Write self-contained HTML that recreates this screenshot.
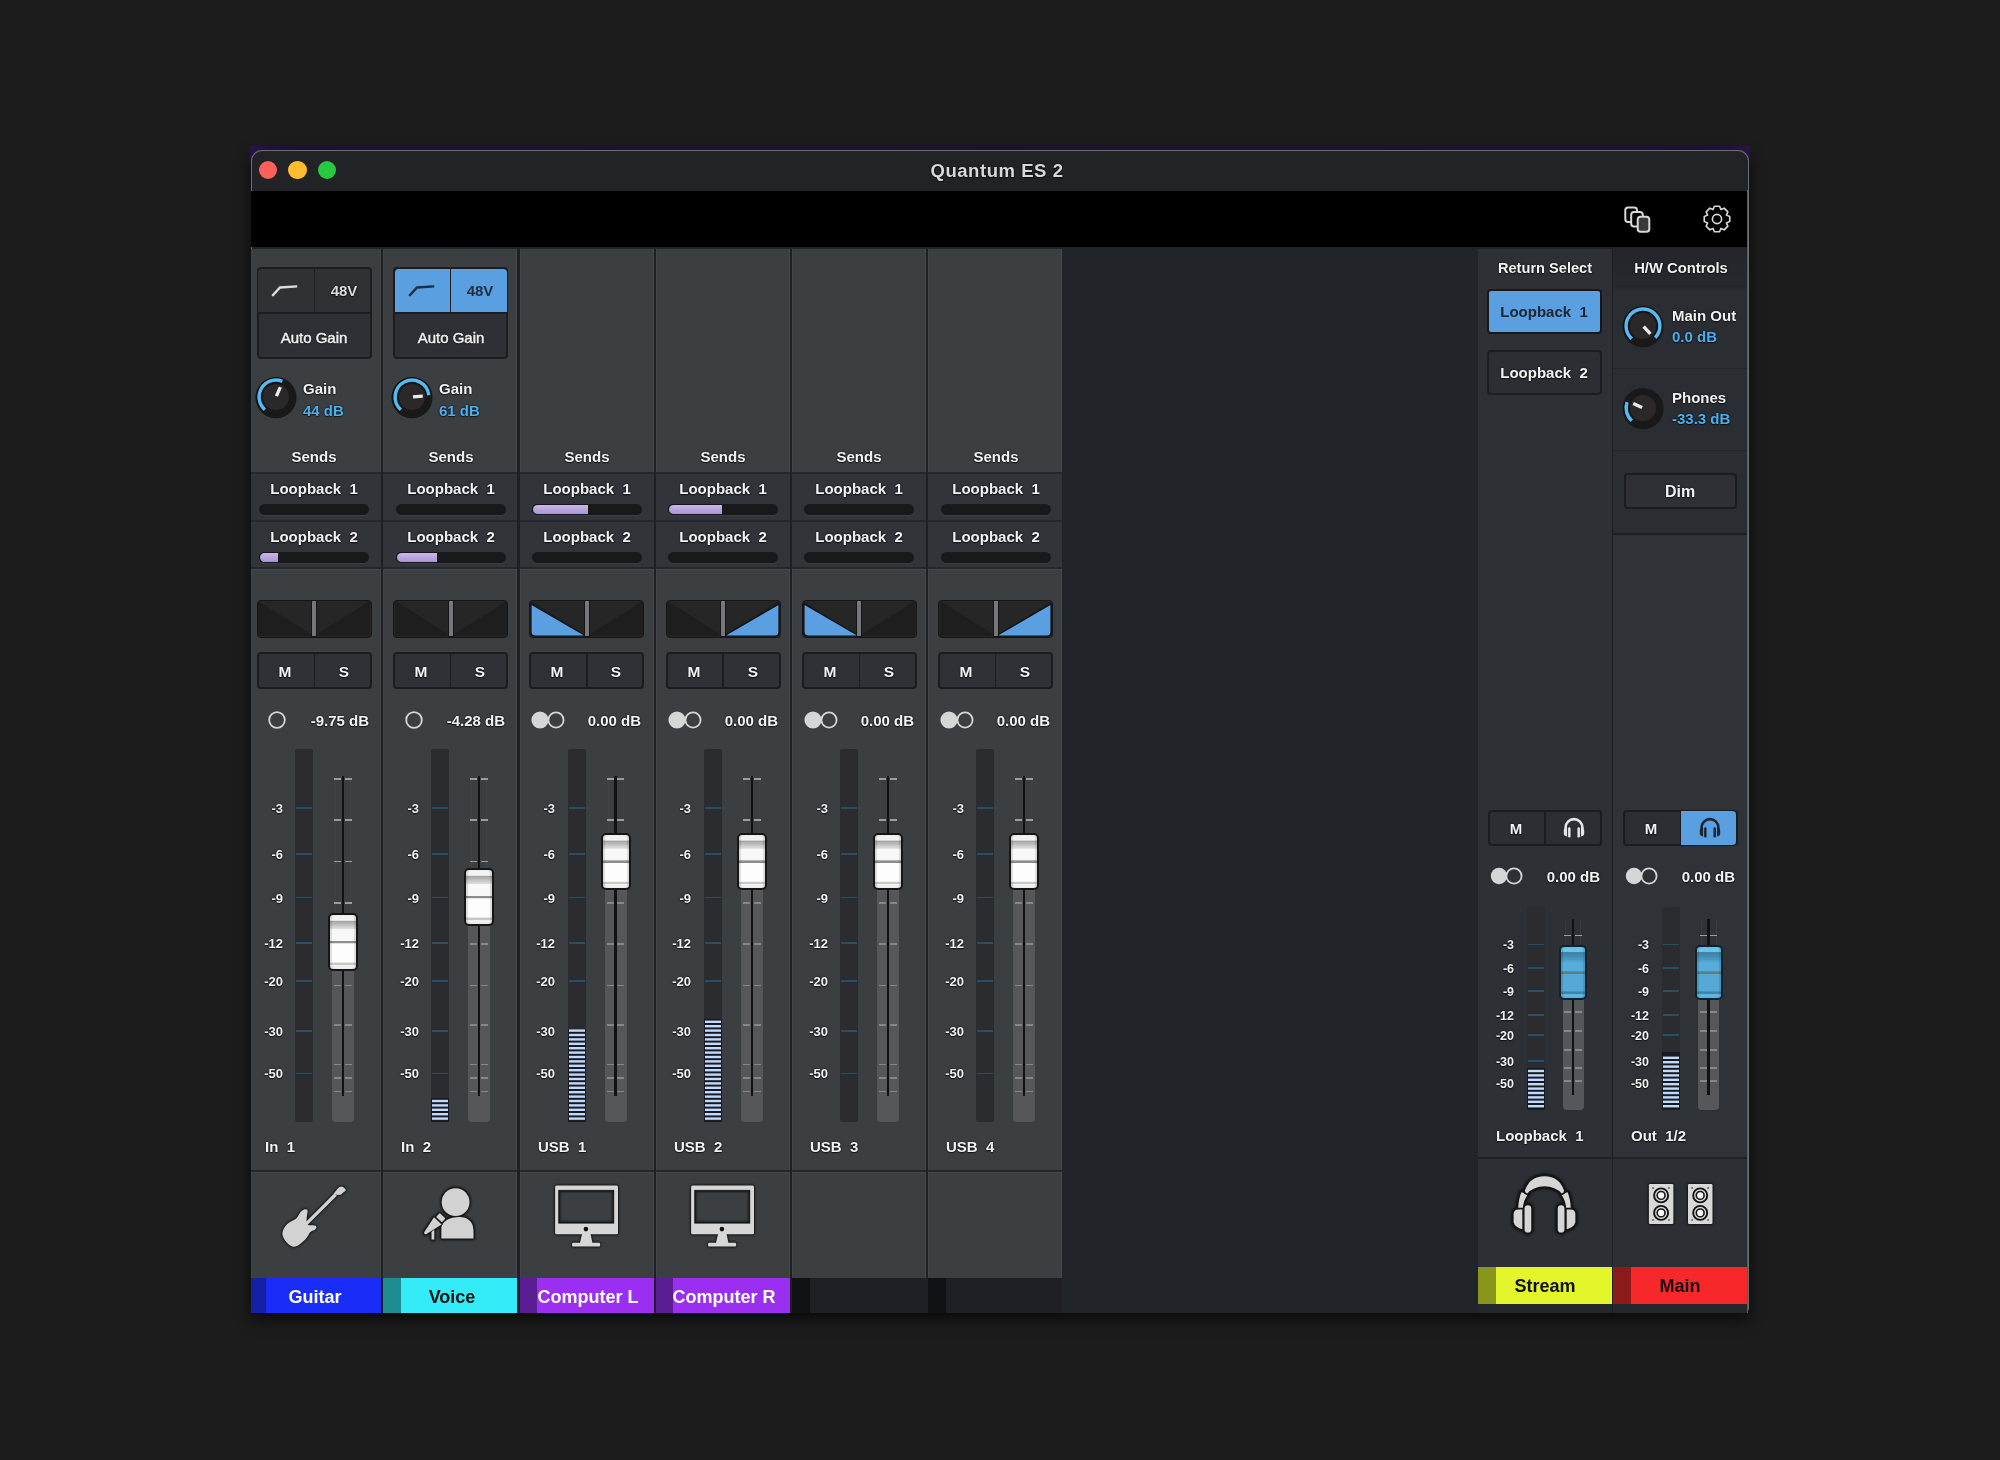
<!DOCTYPE html><html><head><meta charset="utf-8"><style>
html,body{margin:0;padding:0;background:#1c1c1d;width:2000px;height:1460px;overflow:hidden;font-family:"Liberation Sans", sans-serif;}
.a{position:absolute;box-sizing:border-box;}
.t{position:absolute;white-space:pre;line-height:1;text-shadow:0 0 2px rgba(0,0,0,.9),0 1px 1px rgba(0,0,0,.6);will-change:transform;}
</style></head><body>
<div class="a" style="left:250px;top:145.5px;width:1500px;height:16px;background:linear-gradient(90deg,#2c1450 0%,#22123a 3%,#1f1433 50%,#22123a 97%,#2c1450 100%);"></div>
<div class="a" style="left:250.5px;top:150px;width:1498px;height:1163px;background:#212429;border:1.5px solid #6c6d70;border-bottom:none;border-radius:11px 11px 5px 5px;overflow:hidden;box-shadow:0 6px 16px rgba(0,0,0,.65);"></div>
<div class="a" style="left:252px;top:151.5px;width:1495px;height:38.5px;background:#222326;border-radius:10px 10px 0 0;"></div>
<div class="a" style="left:259.1px;top:160.8px;width:18.4px;height:18.4px;border-radius:50%;background:#fe6159;"></div>
<div class="a" style="left:288.3px;top:160.8px;width:18.4px;height:18.4px;border-radius:50%;background:#fdbd2e;"></div>
<div class="a" style="left:317.8px;top:160.8px;width:18.4px;height:18.4px;border-radius:50%;background:#28c940;"></div>
<div class="t" style="left:797px;width:400px;text-align:center;top:161.8px;font-size:18.5px;color:#d9d9d9;font-weight:bold;letter-spacing:0.55px;">Quantum ES 2</div>
<div class="a" style="left:251px;top:190.5px;width:1497px;height:56.5px;background:#000;"></div>
<svg class="a" style="left:1610px;top:195px" width="50" height="50" viewBox="0 0 50 50">
<g fill="none" stroke="#d8d8d8" stroke-width="2">
<rect x="15.3" y="12.4" width="11.7" height="14.6" rx="2.8" fill="#000"/>
<rect x="21.2" y="16.9" width="11.6" height="14.6" rx="2.8" fill="#000"/>
<rect x="27.7" y="21.8" width="11.6" height="14.9" rx="2.8" fill="#3a3a3a"/>
</g></svg>
<svg class="a" style="left:1700px;top:202px" width="34" height="34" viewBox="0 0 34 34">
<path d="M13.12,7.57 L14.42,4.26 L19.58,4.26 L20.88,7.57 L20.93,7.59 L24.18,6.16 L27.84,9.82 L26.41,13.07 L26.43,13.12 L29.74,14.42 L29.74,19.58 L26.43,20.88 L26.41,20.93 L27.84,24.18 L24.18,27.84 L20.93,26.41 L20.88,26.43 L19.58,29.74 L14.42,29.74 L13.12,26.43 L13.07,26.41 L9.82,27.84 L6.16,24.18 L7.59,20.93 L7.57,20.88 L4.26,19.58 L4.26,14.42 L7.57,13.12 L7.59,13.07 L6.16,9.82 L9.82,6.16 L13.07,7.59 Z" fill="none" stroke="#d8d8d8" stroke-width="1.6" stroke-linejoin="round"/>
<circle cx="17" cy="17" r="4.6" fill="none" stroke="#d8d8d8" stroke-width="1.6"/></svg>
<div class="a" style="left:251px;top:249px;width:130.10000000000002px;height:1029px;background:#3b3f42;box-shadow:inset -1px 0 0 rgba(255,255,255,.05), inset 1px 0 0 rgba(255,255,255,.03);"></div>
<div class="a" style="left:251px;top:472px;width:130.10000000000002px;height:97px;background:#313438;border-top:2.2px solid #25272a;border-bottom:2.2px solid #25272a;"></div>
<div class="a" style="left:251px;top:520px;width:130.10000000000002px;height:2.2px;background:#25272a;"></div>
<div class="a" style="left:251px;top:569px;width:130.10000000000002px;height:1px;background:rgba(255,255,255,.05);"></div>
<div class="a" style="left:251px;top:1171.5px;width:130.10000000000002px;height:1px;background:rgba(255,255,255,.04);"></div>
<div class="a" style="left:251px;top:1169.5px;width:130.10000000000002px;height:2px;background:#25272b;"></div>
<div class="a" style="left:381.1px;top:249px;width:2.2px;height:1064px;background:#1e2023;"></div>
<div class="a" style="left:251px;top:1278px;width:130.10000000000002px;height:35px;background:#1a2df6;"></div>
<div class="a" style="left:251px;top:1278px;width:14.5px;height:35px;background:#1420a6;"></div>
<div class="t" style="left:115.30000000000001px;width:400px;text-align:center;top:1288.3px;font-size:18px;color:#fff;font-weight:bold;text-shadow:none;">Guitar</div>
<svg class="a" style="left:270px;top:1175px;filter:drop-shadow(0 0 1.2px #111) drop-shadow(0 0 0.8px #111);" width="90" height="90" viewBox="0 0 90 90"><g transform="translate(39.5,45.6) rotate(45)" fill="#d2d2d2"><path d="M 1.6,4.2 C 3.8,4 5.8,-0.2 8.4,-0.6 C 10.6,-0.7 10.9,2.6 9.8,4.2 C 8.8,5.6 8.4,7.2 8.9,9.2 C 9.6,12 10.6,15 10.3,19 C 10,25 9.5,28.5 6,30.5 C 2,32.2 -4,31.8 -8,29.8 C -12,27.8 -13.6,22 -13.2,17 C -12.9,13 -10.8,10 -11,6.5 C -11.2,3.5 -12.8,1.5 -12.2,-2 C -11.8,-4.8 -10.5,-6.2 -9.2,-6 C -7.6,-5.8 -6.2,-2.8 -4.4,-0.6 C -3.4,0.6 -2.5,1.8 -1.6,2.6 Z"/><path d="M -1.7,5 L -1.7,-37 L 1.7,-37 L 1.7,5 Z"/><path d="M -1.9,-36 L -2.8,-43 Q -2.8,-46.5 0,-47.5 L 3,-47.8 Q 4.8,-47.6 4.4,-45.5 L 3.8,-43 Q 4.5,-41.5 3.6,-40 L 1.9,-38 Z"/></g></svg>
<div class="a" style="left:256.8px;top:267px;width:115px;height:91.5px;background:#2f3035;border:2px solid #1b1d21;border-radius:4px;"></div>
<div class="a" style="left:258.3px;top:268.5px;width:112px;height:44px;background:#2f3135;border-radius:4px 4px 0 0;"></div>
<div class="a" style="left:256.8px;top:312px;width:115px;height:1.5px;background:#1d1e21;"></div>
<div class="a" style="left:313.5px;top:268px;width:1.6px;height:45px;background:#1d1e21;"></div>
<svg class="a" style="left:270.3px;top:280px" width="30" height="20" viewBox="0 0 30 20"><path d="M3,15 L10,7.5 L26,6.5" fill="none" stroke="#dcdcdc" stroke-width="2.4" stroke-linecap="square"/></svg>
<div class="t" style="left:143.8px;width:400px;text-align:center;top:283.3px;font-size:15px;color:#dcdcdc;font-weight:bold;">48V</div>
<div class="t" style="left:114.30000000000001px;width:400px;text-align:center;top:329.5px;font-size:15px;color:#f0f0f0;font-weight:normal;-webkit-text-stroke:0.45px #f0f0f0;">Auto Gain</div>
<svg style="position:absolute;left:254.2px;top:375.2px" width="44" height="44" viewBox="0 0 44 44"><circle cx="22.0" cy="22.6" r="20.6" fill="#19191a"/><circle cx="22.0" cy="22.0" r="13" fill="#2a2829"/><path d="M10.91,34.75 A16.9,16.9 0 0 1 28.33,6.33" fill="none" stroke="#0a0a0b" stroke-width="5.2"/><path d="M10.91,34.75 A16.9,16.9 0 0 1 28.33,6.33" fill="none" stroke="#55b9f2" stroke-width="3.5"/><line x1="22.41" y1="21.09" x2="26.39" y2="12.13" stroke="#ececec" stroke-width="3.3" /></svg>
<div class="t" style="left:303.1px;top:381.3px;font-size:15px;color:#f2f2f2;font-weight:bold;">Gain</div>
<div class="t" style="left:303.1px;top:403.3px;font-size:15px;color:#4aaff0;font-weight:bold;">44 dB</div>
<div class="t" style="left:114.30000000000001px;width:400px;text-align:center;top:448.9px;font-size:15px;color:#f2f2f2;font-weight:bold;">Sends</div>
<div class="t" style="left:114.30000000000001px;width:400px;text-align:center;top:481.3px;font-size:15px;color:#f2f2f2;font-weight:bold;">Loopback  1</div>
<div class="a" style="left:259.3px;top:504.4px;width:110px;height:11px;background:#17191a;border-radius:6px;box-shadow:0 1px 0 rgba(255,255,255,.05);"></div>
<div class="t" style="left:114.30000000000001px;width:400px;text-align:center;top:528.7px;font-size:15px;color:#f2f2f2;font-weight:bold;">Loopback  2</div>
<div class="a" style="left:259.3px;top:551.7px;width:110px;height:11px;background:#17191a;border-radius:6px;box-shadow:0 1px 0 rgba(255,255,255,.05);"></div>
<div class="a" style="left:259.3px;top:551.7px;width:19.8px;height:11px;background:linear-gradient(#c8b8e6,#a996d0);border:1.5px solid #16171a;border-radius:6px 1px 1px 6px;"></div>
<div class="a" style="left:256.8px;top:599.5px;width:115px;height:38px;background:#262626;border:1.5px solid #161617;border-radius:4px;overflow:hidden;"></div>
<svg class="a" style="left:258.3px;top:601px" width="112" height="35" viewBox="0 0 112 35"><path d="M0,0 L56,35 L112,0 L112,35 L0,35 Z" fill="#1e1e1f"/></svg>
<div class="a" style="left:311.3px;top:600.5px;width:6px;height:36px;background:#151516;"></div>
<div class="a" style="left:312.3px;top:601px;width:4px;height:35px;background:#76777a;"></div>
<div class="a" style="left:256.8px;top:652.3px;width:115px;height:37.2px;background:#303137;border:2px solid #1b1d21;border-radius:4px;"></div>
<div class="a" style="left:313.5px;top:653px;width:1.6px;height:36px;background:#1c1d20;"></div>
<div class="t" style="left:84.80000000000001px;width:400px;text-align:center;top:663.9px;font-size:15.5px;color:#f2f2f2;font-weight:bold;">M</div>
<div class="t" style="left:143.8px;width:400px;text-align:center;top:663.9px;font-size:15.5px;color:#f2f2f2;font-weight:bold;">S</div>
<svg class="a" style="left:267.3px;top:710px" width="20" height="20" viewBox="0 0 20 20"><circle cx="10" cy="10" r="7.8" fill="none" stroke="#d6d6d6" stroke-width="1.8"/></svg>
<div class="t" style="left:-31.19999999999999px;width:400px;text-align:right;top:712.8px;font-size:15px;color:#f2f2f2;font-weight:bold;">-9.75 dB</div>
<div class="t" style="left:-117.30000000000001px;width:400px;text-align:right;top:802.0px;font-size:13px;color:#f2f2f2;font-weight:bold;">-3</div>
<div class="t" style="left:-117.30000000000001px;width:400px;text-align:right;top:847.7px;font-size:13px;color:#f2f2f2;font-weight:bold;">-6</div>
<div class="t" style="left:-117.30000000000001px;width:400px;text-align:right;top:891.5px;font-size:13px;color:#f2f2f2;font-weight:bold;">-9</div>
<div class="t" style="left:-117.30000000000001px;width:400px;text-align:right;top:936.7px;font-size:13px;color:#f2f2f2;font-weight:bold;">-12</div>
<div class="t" style="left:-117.30000000000001px;width:400px;text-align:right;top:974.8px;font-size:13px;color:#f2f2f2;font-weight:bold;">-20</div>
<div class="t" style="left:-117.30000000000001px;width:400px;text-align:right;top:1024.6px;font-size:13px;color:#f2f2f2;font-weight:bold;">-30</div>
<div class="t" style="left:-117.30000000000001px;width:400px;text-align:right;top:1067.1px;font-size:13px;color:#f2f2f2;font-weight:bold;">-50</div>
<div class="a" style="left:295.0px;top:749px;width:18px;height:373px;background:#2a2c30;border-radius:2px;"></div><div class="a" style="left:296.0px;top:807.4000000000001px;width:16px;height:1.6px;background:#2b4d66;"></div><div class="a" style="left:296.0px;top:853.1px;width:16px;height:1.6px;background:#2b4d66;"></div><div class="a" style="left:296.0px;top:896.9000000000001px;width:16px;height:1.6px;background:#2b4d66;"></div><div class="a" style="left:296.0px;top:942.1px;width:16px;height:1.6px;background:#2b4d66;"></div><div class="a" style="left:296.0px;top:980.2px;width:16px;height:1.6px;background:#2b4d66;"></div><div class="a" style="left:296.0px;top:1030.0px;width:16px;height:1.6px;background:#2b4d66;"></div><div class="a" style="left:296.0px;top:1072.5px;width:16px;height:1.6px;background:#2b4d66;"></div>
<div class="a" style="left:332.0px;top:966.75px;width:22px;height:154.75px;background:#55575b;border-radius:0 0 4px 4px;"></div><div class="a" style="left:335.0px;top:776px;width:1px;height:137.25px;background:rgba(90,92,96,.2);"></div><div class="a" style="left:350.0px;top:776px;width:1px;height:137.25px;background:rgba(90,92,96,.2);"></div><div class="a" style="left:341.9px;top:776px;width:2.2px;height:320px;background:#111214;"></div><div class="a" style="left:334.0px;top:778.2px;width:7px;height:1.6px;background:#9a9c9f;"></div><div class="a" style="left:344.8px;top:778.2px;width:7px;height:1.6px;background:#9a9c9f;"></div><div class="a" style="left:334.0px;top:819.2px;width:7px;height:1.6px;background:#9a9c9f;"></div><div class="a" style="left:344.8px;top:819.2px;width:7px;height:1.6px;background:#9a9c9f;"></div><div class="a" style="left:334.0px;top:860.7px;width:7px;height:1.6px;background:#9a9c9f;"></div><div class="a" style="left:344.8px;top:860.7px;width:7px;height:1.6px;background:#9a9c9f;"></div><div class="a" style="left:334.0px;top:902.2px;width:7px;height:1.6px;background:#9a9c9f;"></div><div class="a" style="left:344.8px;top:902.2px;width:7px;height:1.6px;background:#9a9c9f;"></div><div class="a" style="left:334.0px;top:943.2px;width:7px;height:1.6px;background:#9a9c9f;"></div><div class="a" style="left:344.8px;top:943.2px;width:7px;height:1.6px;background:#9a9c9f;"></div><div class="a" style="left:334.0px;top:984.7px;width:7px;height:1.6px;background:#85878a;"></div><div class="a" style="left:344.8px;top:984.7px;width:7px;height:1.6px;background:#85878a;"></div><div class="a" style="left:334.0px;top:1024.2px;width:7px;height:1.6px;background:#85878a;"></div><div class="a" style="left:344.8px;top:1024.2px;width:7px;height:1.6px;background:#85878a;"></div><div class="a" style="left:334.0px;top:1063.8px;width:7px;height:1.6px;background:#85878a;"></div><div class="a" style="left:344.8px;top:1063.8px;width:7px;height:1.6px;background:#85878a;"></div><div class="a" style="left:334.0px;top:1077.2px;width:7px;height:1.6px;background:#85878a;"></div><div class="a" style="left:344.8px;top:1077.2px;width:7px;height:1.6px;background:#85878a;"></div><div class="a" style="left:334.0px;top:1090.6000000000001px;width:7px;height:1.6px;background:#85878a;"></div><div class="a" style="left:344.8px;top:1090.6000000000001px;width:7px;height:1.6px;background:#85878a;"></div><div class="a" style="left:328.0px;top:913.25px;width:30px;height:57.5px;background:linear-gradient(#f3f3f3 0%,#f3f3f3 10%,#a2a2a2 11%,#dddddd 25%,#f8f8f8 27%,#f8f8f8 47.5%,#8c8c8c 48.5%,#8c8c8c 52%,#fdfdfd 53%,#fdfdfd 87.5%,#c8c8c8 88.5%,#c8c8c8 92%,#f0f0f0 93%,#f0f0f0 100%);border:2.2px solid #161616;border-radius:5px;box-shadow:inset 2px 0 1px rgba(0,0,0,.12),inset -2px 0 1px rgba(0,0,0,.12);"></div>
<div class="t" style="left:265.1px;top:1139.0px;font-size:15px;color:#f2f2f2;font-weight:bold;">In  1</div>
<div class="a" style="left:383.36px;top:249px;width:134.0px;height:1029px;background:#3b3f42;box-shadow:inset -1px 0 0 rgba(255,255,255,.05), inset 1px 0 0 rgba(255,255,255,.03);"></div>
<div class="a" style="left:383.36px;top:472px;width:134.0px;height:97px;background:#313438;border-top:2.2px solid #25272a;border-bottom:2.2px solid #25272a;"></div>
<div class="a" style="left:383.36px;top:520px;width:134.0px;height:2.2px;background:#25272a;"></div>
<div class="a" style="left:383.36px;top:569px;width:134.0px;height:1px;background:rgba(255,255,255,.05);"></div>
<div class="a" style="left:383.36px;top:1171.5px;width:134.0px;height:1px;background:rgba(255,255,255,.04);"></div>
<div class="a" style="left:383.36px;top:1169.5px;width:134.0px;height:2px;background:#25272b;"></div>
<div class="a" style="left:517.36px;top:249px;width:2.2px;height:1064px;background:#1e2023;"></div>
<div class="a" style="left:383.36px;top:1278px;width:134.0px;height:35px;background:#33ecf7;"></div>
<div class="a" style="left:383.36px;top:1278px;width:17.5px;height:35px;background:#1f8c92;"></div>
<div class="t" style="left:251.56px;width:400px;text-align:center;top:1288.3px;font-size:18px;color:#111;font-weight:bold;text-shadow:none;">Voice</div>
<svg class="a" style="left:405.06px;top:1175px;filter:drop-shadow(0 0 1.2px #111) drop-shadow(0 0 0.8px #111);" width="90" height="90" viewBox="0 0 90 90"><g fill="#d2d2d2" stroke="#1b1b1c" stroke-width="1.5" paint-order="stroke"><circle cx="50.6" cy="27.2" r="13.9"/><path d="M 36.4,63.6 L 36.4,52.5 C 36.8,46.5 44,42 55,41.9 C 62,42 66.5,46 67.8,51 C 68.6,54.5 68.6,58.5 68.5,63.6 Z"/><rect x="26.5" y="50.5" width="2.8" height="14"/><path d="M 29,42.3 L 36.6,49.4 L 21.5,59 Q 19.2,59.8 19,57.5 Z"/><g transform="translate(35.8,42.7) rotate(43)"><rect x="-4" y="-2.6" width="8" height="5.2" rx="0.8"/></g></g></svg>
<div class="a" style="left:393.06px;top:267px;width:115px;height:91.5px;background:#2f3035;border:2px solid #1b1d21;border-radius:4px;"></div>
<div class="a" style="left:394.56px;top:268.5px;width:112px;height:44px;background:#5a9fe0;border-radius:4px 4px 0 0;"></div>
<div class="a" style="left:393.06px;top:312px;width:115px;height:1.5px;background:#1d1e21;"></div>
<div class="a" style="left:449.76px;top:268px;width:1.6px;height:45px;background:#1d1e21;"></div>
<svg class="a" style="left:406.56px;top:280px" width="30" height="20" viewBox="0 0 30 20"><path d="M3,15 L10,7.5 L26,6.5" fill="none" stroke="#1f2e40" stroke-width="2.4" stroke-linecap="square"/></svg>
<div class="t" style="left:280.06px;width:400px;text-align:center;top:283.3px;font-size:15px;color:#1f2e40;font-weight:bold;text-shadow:none;">48V</div>
<div class="t" style="left:250.56px;width:400px;text-align:center;top:329.5px;font-size:15px;color:#f0f0f0;font-weight:normal;-webkit-text-stroke:0.45px #f0f0f0;">Auto Gain</div>
<svg style="position:absolute;left:390.46px;top:375.2px" width="44" height="44" viewBox="0 0 44 44"><circle cx="22.0" cy="22.6" r="20.6" fill="#19191a"/><circle cx="22.0" cy="22.0" r="13" fill="#2a2829"/><path d="M10.91,34.75 A16.9,16.9 0 1 1 38.81,20.23" fill="none" stroke="#0a0a0b" stroke-width="5.2"/><path d="M10.91,34.75 A16.9,16.9 0 1 1 38.81,20.23" fill="none" stroke="#55b9f2" stroke-width="3.5"/><line x1="23.00" y1="21.91" x2="32.76" y2="21.06" stroke="#ececec" stroke-width="3.3" /></svg>
<div class="t" style="left:439.36px;top:381.3px;font-size:15px;color:#f2f2f2;font-weight:bold;">Gain</div>
<div class="t" style="left:439.36px;top:403.3px;font-size:15px;color:#4aaff0;font-weight:bold;">61 dB</div>
<div class="t" style="left:250.56px;width:400px;text-align:center;top:448.9px;font-size:15px;color:#f2f2f2;font-weight:bold;">Sends</div>
<div class="t" style="left:250.56px;width:400px;text-align:center;top:481.3px;font-size:15px;color:#f2f2f2;font-weight:bold;">Loopback  1</div>
<div class="a" style="left:395.56px;top:504.4px;width:110px;height:11px;background:#17191a;border-radius:6px;box-shadow:0 1px 0 rgba(255,255,255,.05);"></div>
<div class="t" style="left:250.56px;width:400px;text-align:center;top:528.7px;font-size:15px;color:#f2f2f2;font-weight:bold;">Loopback  2</div>
<div class="a" style="left:395.56px;top:551.7px;width:110px;height:11px;background:#17191a;border-radius:6px;box-shadow:0 1px 0 rgba(255,255,255,.05);"></div>
<div class="a" style="left:395.56px;top:551.7px;width:42.9px;height:11px;background:linear-gradient(#c8b8e6,#a996d0);border:1.5px solid #16171a;border-radius:6px 1px 1px 6px;"></div>
<div class="a" style="left:393.06px;top:599.5px;width:115px;height:38px;background:#262626;border:1.5px solid #161617;border-radius:4px;overflow:hidden;"></div>
<svg class="a" style="left:394.56px;top:601px" width="112" height="35" viewBox="0 0 112 35"><path d="M0,0 L56,35 L112,0 L112,35 L0,35 Z" fill="#1e1e1f"/></svg>
<div class="a" style="left:447.56px;top:600.5px;width:6px;height:36px;background:#151516;"></div>
<div class="a" style="left:448.56px;top:601px;width:4px;height:35px;background:#76777a;"></div>
<div class="a" style="left:393.06px;top:652.3px;width:115px;height:37.2px;background:#303137;border:2px solid #1b1d21;border-radius:4px;"></div>
<div class="a" style="left:449.76px;top:653px;width:1.6px;height:36px;background:#1c1d20;"></div>
<div class="t" style="left:221.06px;width:400px;text-align:center;top:663.9px;font-size:15.5px;color:#f2f2f2;font-weight:bold;">M</div>
<div class="t" style="left:280.06px;width:400px;text-align:center;top:663.9px;font-size:15.5px;color:#f2f2f2;font-weight:bold;">S</div>
<svg class="a" style="left:403.56px;top:710px" width="20" height="20" viewBox="0 0 20 20"><circle cx="10" cy="10" r="7.8" fill="none" stroke="#d6d6d6" stroke-width="1.8"/></svg>
<div class="t" style="left:105.06px;width:400px;text-align:right;top:712.8px;font-size:15px;color:#f2f2f2;font-weight:bold;">-4.28 dB</div>
<div class="t" style="left:18.95999999999998px;width:400px;text-align:right;top:802.0px;font-size:13px;color:#f2f2f2;font-weight:bold;">-3</div>
<div class="t" style="left:18.95999999999998px;width:400px;text-align:right;top:847.7px;font-size:13px;color:#f2f2f2;font-weight:bold;">-6</div>
<div class="t" style="left:18.95999999999998px;width:400px;text-align:right;top:891.5px;font-size:13px;color:#f2f2f2;font-weight:bold;">-9</div>
<div class="t" style="left:18.95999999999998px;width:400px;text-align:right;top:936.7px;font-size:13px;color:#f2f2f2;font-weight:bold;">-12</div>
<div class="t" style="left:18.95999999999998px;width:400px;text-align:right;top:974.8px;font-size:13px;color:#f2f2f2;font-weight:bold;">-20</div>
<div class="t" style="left:18.95999999999998px;width:400px;text-align:right;top:1024.6px;font-size:13px;color:#f2f2f2;font-weight:bold;">-30</div>
<div class="t" style="left:18.95999999999998px;width:400px;text-align:right;top:1067.1px;font-size:13px;color:#f2f2f2;font-weight:bold;">-50</div>
<div class="a" style="left:431.26px;top:749px;width:18px;height:373px;background:#2a2c30;border-radius:2px;"></div><div class="a" style="left:432.26px;top:807.4000000000001px;width:16px;height:1.6px;background:#2b4d66;"></div><div class="a" style="left:432.26px;top:853.1px;width:16px;height:1.6px;background:#2b4d66;"></div><div class="a" style="left:432.26px;top:896.9000000000001px;width:16px;height:1.6px;background:#2b4d66;"></div><div class="a" style="left:432.26px;top:942.1px;width:16px;height:1.6px;background:#2b4d66;"></div><div class="a" style="left:432.26px;top:980.2px;width:16px;height:1.6px;background:#2b4d66;"></div><div class="a" style="left:432.26px;top:1030.0px;width:16px;height:1.6px;background:#2b4d66;"></div><div class="a" style="left:432.26px;top:1072.5px;width:16px;height:1.6px;background:#2b4d66;"></div><svg class="a" style="left:431.26px;top:1098px" width="18" height="24" viewBox="0 0 18 24"><rect width="18" height="24" fill="#161a22"/><rect x="1" y="19.40" width="16" height="2.4" fill="#c4d9fb"/><rect x="1" y="15.00" width="16" height="2.4" fill="#c4d9fb"/><rect x="1" y="10.60" width="16" height="2.4" fill="#c4d9fb"/><rect x="1" y="6.20" width="16" height="2.4" fill="#c4d9fb"/><rect x="1" y="1.80" width="16" height="2.4" fill="#c4d9fb"/></svg>
<div class="a" style="left:468.26px;top:921.75px;width:22px;height:199.75px;background:#55575b;border-radius:0 0 4px 4px;"></div><div class="a" style="left:471.26px;top:776px;width:1px;height:92.25px;background:rgba(90,92,96,.2);"></div><div class="a" style="left:486.26px;top:776px;width:1px;height:92.25px;background:rgba(90,92,96,.2);"></div><div class="a" style="left:478.15999999999997px;top:776px;width:2.2px;height:320px;background:#111214;"></div><div class="a" style="left:470.26px;top:778.2px;width:7px;height:1.6px;background:#9a9c9f;"></div><div class="a" style="left:481.06px;top:778.2px;width:7px;height:1.6px;background:#9a9c9f;"></div><div class="a" style="left:470.26px;top:819.2px;width:7px;height:1.6px;background:#9a9c9f;"></div><div class="a" style="left:481.06px;top:819.2px;width:7px;height:1.6px;background:#9a9c9f;"></div><div class="a" style="left:470.26px;top:860.7px;width:7px;height:1.6px;background:#9a9c9f;"></div><div class="a" style="left:481.06px;top:860.7px;width:7px;height:1.6px;background:#9a9c9f;"></div><div class="a" style="left:470.26px;top:902.2px;width:7px;height:1.6px;background:#9a9c9f;"></div><div class="a" style="left:481.06px;top:902.2px;width:7px;height:1.6px;background:#9a9c9f;"></div><div class="a" style="left:470.26px;top:943.2px;width:7px;height:1.6px;background:#85878a;"></div><div class="a" style="left:481.06px;top:943.2px;width:7px;height:1.6px;background:#85878a;"></div><div class="a" style="left:470.26px;top:984.7px;width:7px;height:1.6px;background:#85878a;"></div><div class="a" style="left:481.06px;top:984.7px;width:7px;height:1.6px;background:#85878a;"></div><div class="a" style="left:470.26px;top:1024.2px;width:7px;height:1.6px;background:#85878a;"></div><div class="a" style="left:481.06px;top:1024.2px;width:7px;height:1.6px;background:#85878a;"></div><div class="a" style="left:470.26px;top:1063.8px;width:7px;height:1.6px;background:#85878a;"></div><div class="a" style="left:481.06px;top:1063.8px;width:7px;height:1.6px;background:#85878a;"></div><div class="a" style="left:470.26px;top:1077.2px;width:7px;height:1.6px;background:#85878a;"></div><div class="a" style="left:481.06px;top:1077.2px;width:7px;height:1.6px;background:#85878a;"></div><div class="a" style="left:470.26px;top:1090.6000000000001px;width:7px;height:1.6px;background:#85878a;"></div><div class="a" style="left:481.06px;top:1090.6000000000001px;width:7px;height:1.6px;background:#85878a;"></div><div class="a" style="left:464.26px;top:868.25px;width:30px;height:57.5px;background:linear-gradient(#f3f3f3 0%,#f3f3f3 10%,#a2a2a2 11%,#dddddd 25%,#f8f8f8 27%,#f8f8f8 47.5%,#8c8c8c 48.5%,#8c8c8c 52%,#fdfdfd 53%,#fdfdfd 87.5%,#c8c8c8 88.5%,#c8c8c8 92%,#f0f0f0 93%,#f0f0f0 100%);border:2.2px solid #161616;border-radius:5px;box-shadow:inset 2px 0 1px rgba(0,0,0,.12),inset -2px 0 1px rgba(0,0,0,.12);"></div>
<div class="t" style="left:401.36px;top:1139.0px;font-size:15px;color:#f2f2f2;font-weight:bold;">In  2</div>
<div class="a" style="left:519.6199999999999px;top:249px;width:134.0px;height:1029px;background:#3b3f42;box-shadow:inset -1px 0 0 rgba(255,255,255,.05), inset 1px 0 0 rgba(255,255,255,.03);"></div>
<div class="a" style="left:519.6199999999999px;top:472px;width:134.0px;height:97px;background:#313438;border-top:2.2px solid #25272a;border-bottom:2.2px solid #25272a;"></div>
<div class="a" style="left:519.6199999999999px;top:520px;width:134.0px;height:2.2px;background:#25272a;"></div>
<div class="a" style="left:519.6199999999999px;top:569px;width:134.0px;height:1px;background:rgba(255,255,255,.05);"></div>
<div class="a" style="left:519.6199999999999px;top:1171.5px;width:134.0px;height:1px;background:rgba(255,255,255,.04);"></div>
<div class="a" style="left:519.6199999999999px;top:1169.5px;width:134.0px;height:2px;background:#25272b;"></div>
<div class="a" style="left:653.6199999999999px;top:249px;width:2.2px;height:1064px;background:#1e2023;"></div>
<div class="a" style="left:519.6199999999999px;top:1278px;width:134.0px;height:35px;background:#9a2ff2;"></div>
<div class="a" style="left:519.6199999999999px;top:1278px;width:17.5px;height:35px;background:#5b1d92;"></div>
<div class="t" style="left:387.81999999999994px;width:400px;text-align:center;top:1288.3px;font-size:18px;color:#fff;font-weight:bold;text-shadow:none;">Computer L</div>
<svg class="a" style="left:540.02px;top:1175px;filter:drop-shadow(0 0 1.2px #111) drop-shadow(0 0 0.8px #111);" width="90" height="90" viewBox="0 0 90 90"><path fill="#d6d6d6" fill-rule="evenodd" d="M 16.6,10.5 L 76.5,10.5 Q 78,10.5 78,12 L 78,57.7 Q 78,59.2 76.5,59.2 L 16.6,59.2 Q 15.1,59.2 15.1,57.7 L 15.1,12 Q 15.1,10.5 16.6,10.5 Z M 18.8,15.4 L 18.8,48.1 L 73.7,48.1 L 73.7,15.4 Z"/><rect x="18.8" y="15.4" width="54.9" height="32.7" fill="none" stroke="#1a1a1a" stroke-width="1"/><circle cx="45.9" cy="54.1" r="2.3" fill="#111"/><path fill="#d6d6d6" d="M 42,59 L 50.6,59 L 52.4,67.8 L 59,67.8 Q 60.2,67.8 60.2,69 L 60.2,70.3 Q 60.2,71.5 59,71.5 L 33.2,71.5 Q 32,71.5 32,70.3 L 32,69 Q 32,67.8 33.2,67.8 L 40,67.8 Z"/></svg>
<div class="t" style="left:386.81999999999994px;width:400px;text-align:center;top:448.9px;font-size:15px;color:#f2f2f2;font-weight:bold;">Sends</div>
<div class="t" style="left:386.81999999999994px;width:400px;text-align:center;top:481.3px;font-size:15px;color:#f2f2f2;font-weight:bold;">Loopback  1</div>
<div class="a" style="left:531.8199999999999px;top:504.4px;width:110px;height:11px;background:#17191a;border-radius:6px;box-shadow:0 1px 0 rgba(255,255,255,.05);"></div>
<div class="a" style="left:531.8199999999999px;top:504.4px;width:57.2px;height:11px;background:linear-gradient(#c8b8e6,#a996d0);border:1.5px solid #16171a;border-radius:6px 1px 1px 6px;"></div>
<div class="t" style="left:386.81999999999994px;width:400px;text-align:center;top:528.7px;font-size:15px;color:#f2f2f2;font-weight:bold;">Loopback  2</div>
<div class="a" style="left:531.8199999999999px;top:551.7px;width:110px;height:11px;background:#17191a;border-radius:6px;box-shadow:0 1px 0 rgba(255,255,255,.05);"></div>
<div class="a" style="left:529.3199999999999px;top:599.5px;width:115px;height:38px;background:#262626;border:1.5px solid #161617;border-radius:4px;overflow:hidden;"></div>
<svg class="a" style="left:530.8199999999999px;top:601px" width="112" height="35" viewBox="0 0 112 35"><path d="M0,0 L56,35 L112,0 L112,35 L0,35 Z" fill="#1e1e1f"/></svg>
<svg class="a" style="left:529.3199999999999px;top:599.5px" width="115" height="38" viewBox="0 0 115 38"><path d="M2,4 L57,36 L6,36 Q2,36 2,32 Z" fill="#5a9fe2" stroke="#111" stroke-width="1.2"/></svg>
<div class="a" style="left:583.8199999999999px;top:600.5px;width:6px;height:36px;background:#151516;"></div>
<div class="a" style="left:584.8199999999999px;top:601px;width:4px;height:35px;background:#76777a;"></div>
<div class="a" style="left:529.3199999999999px;top:652.3px;width:115px;height:37.2px;background:#303137;border:2px solid #1b1d21;border-radius:4px;"></div>
<div class="a" style="left:586.02px;top:653px;width:1.6px;height:36px;background:#1c1d20;"></div>
<div class="t" style="left:357.31999999999994px;width:400px;text-align:center;top:663.9px;font-size:15.5px;color:#f2f2f2;font-weight:bold;">M</div>
<div class="t" style="left:416.31999999999994px;width:400px;text-align:center;top:663.9px;font-size:15.5px;color:#f2f2f2;font-weight:bold;">S</div>
<svg class="a" style="left:530.3199999999999px;top:710px" width="36" height="20" viewBox="0 0 36 20"><circle cx="10" cy="10" r="8.6" fill="#d6d6d6"/><circle cx="26" cy="10" r="7.6" fill="#3b3f42" stroke="#d6d6d6" stroke-width="1.8"/></svg>
<div class="t" style="left:241.31999999999994px;width:400px;text-align:right;top:712.8px;font-size:15px;color:#f2f2f2;font-weight:bold;">0.00 dB</div>
<div class="t" style="left:155.2199999999999px;width:400px;text-align:right;top:802.0px;font-size:13px;color:#f2f2f2;font-weight:bold;">-3</div>
<div class="t" style="left:155.2199999999999px;width:400px;text-align:right;top:847.7px;font-size:13px;color:#f2f2f2;font-weight:bold;">-6</div>
<div class="t" style="left:155.2199999999999px;width:400px;text-align:right;top:891.5px;font-size:13px;color:#f2f2f2;font-weight:bold;">-9</div>
<div class="t" style="left:155.2199999999999px;width:400px;text-align:right;top:936.7px;font-size:13px;color:#f2f2f2;font-weight:bold;">-12</div>
<div class="t" style="left:155.2199999999999px;width:400px;text-align:right;top:974.8px;font-size:13px;color:#f2f2f2;font-weight:bold;">-20</div>
<div class="t" style="left:155.2199999999999px;width:400px;text-align:right;top:1024.6px;font-size:13px;color:#f2f2f2;font-weight:bold;">-30</div>
<div class="t" style="left:155.2199999999999px;width:400px;text-align:right;top:1067.1px;font-size:13px;color:#f2f2f2;font-weight:bold;">-50</div>
<div class="a" style="left:567.52px;top:749px;width:18px;height:373px;background:#2a2c30;border-radius:2px;"></div><div class="a" style="left:568.52px;top:807.4000000000001px;width:16px;height:1.6px;background:#2b4d66;"></div><div class="a" style="left:568.52px;top:853.1px;width:16px;height:1.6px;background:#2b4d66;"></div><div class="a" style="left:568.52px;top:896.9000000000001px;width:16px;height:1.6px;background:#2b4d66;"></div><div class="a" style="left:568.52px;top:942.1px;width:16px;height:1.6px;background:#2b4d66;"></div><div class="a" style="left:568.52px;top:980.2px;width:16px;height:1.6px;background:#2b4d66;"></div><svg class="a" style="left:567.52px;top:1029px" width="18" height="93" viewBox="0 0 18 93"><rect width="18" height="93" fill="#161a22"/><rect x="1" y="88.40" width="16" height="2.4" fill="#c4d9fb"/><rect x="1" y="84.00" width="16" height="2.4" fill="#c4d9fb"/><rect x="1" y="79.60" width="16" height="2.4" fill="#c4d9fb"/><rect x="1" y="75.20" width="16" height="2.4" fill="#c4d9fb"/><rect x="1" y="70.80" width="16" height="2.4" fill="#c4d9fb"/><rect x="1" y="66.40" width="16" height="2.4" fill="#c4d9fb"/><rect x="1" y="62.00" width="16" height="2.4" fill="#c4d9fb"/><rect x="1" y="57.60" width="16" height="2.4" fill="#c4d9fb"/><rect x="1" y="53.20" width="16" height="2.4" fill="#c4d9fb"/><rect x="1" y="48.80" width="16" height="2.4" fill="#c4d9fb"/><rect x="1" y="44.40" width="16" height="2.4" fill="#c4d9fb"/><rect x="1" y="40.00" width="16" height="2.4" fill="#c4d9fb"/><rect x="1" y="35.60" width="16" height="2.4" fill="#c4d9fb"/><rect x="1" y="31.20" width="16" height="2.4" fill="#c4d9fb"/><rect x="1" y="26.80" width="16" height="2.4" fill="#c4d9fb"/><rect x="1" y="22.40" width="16" height="2.4" fill="#c4d9fb"/><rect x="1" y="18.00" width="16" height="2.4" fill="#c4d9fb"/><rect x="1" y="13.60" width="16" height="2.4" fill="#c4d9fb"/><rect x="1" y="9.20" width="16" height="2.4" fill="#c4d9fb"/><rect x="1" y="4.80" width="16" height="2.4" fill="#c4d9fb"/><rect x="1" y="0.40" width="16" height="2.4" fill="#c4d9fb"/></svg>
<div class="a" style="left:604.52px;top:886.25px;width:22px;height:235.25px;background:#55575b;border-radius:0 0 4px 4px;"></div><div class="a" style="left:607.52px;top:776px;width:1px;height:56.75px;background:rgba(90,92,96,.2);"></div><div class="a" style="left:622.52px;top:776px;width:1px;height:56.75px;background:rgba(90,92,96,.2);"></div><div class="a" style="left:614.42px;top:776px;width:2.2px;height:320px;background:#111214;"></div><div class="a" style="left:606.52px;top:778.2px;width:7px;height:1.6px;background:#9a9c9f;"></div><div class="a" style="left:617.3199999999999px;top:778.2px;width:7px;height:1.6px;background:#9a9c9f;"></div><div class="a" style="left:606.52px;top:819.2px;width:7px;height:1.6px;background:#9a9c9f;"></div><div class="a" style="left:617.3199999999999px;top:819.2px;width:7px;height:1.6px;background:#9a9c9f;"></div><div class="a" style="left:606.52px;top:860.7px;width:7px;height:1.6px;background:#9a9c9f;"></div><div class="a" style="left:617.3199999999999px;top:860.7px;width:7px;height:1.6px;background:#9a9c9f;"></div><div class="a" style="left:606.52px;top:902.2px;width:7px;height:1.6px;background:#85878a;"></div><div class="a" style="left:617.3199999999999px;top:902.2px;width:7px;height:1.6px;background:#85878a;"></div><div class="a" style="left:606.52px;top:943.2px;width:7px;height:1.6px;background:#85878a;"></div><div class="a" style="left:617.3199999999999px;top:943.2px;width:7px;height:1.6px;background:#85878a;"></div><div class="a" style="left:606.52px;top:984.7px;width:7px;height:1.6px;background:#85878a;"></div><div class="a" style="left:617.3199999999999px;top:984.7px;width:7px;height:1.6px;background:#85878a;"></div><div class="a" style="left:606.52px;top:1024.2px;width:7px;height:1.6px;background:#85878a;"></div><div class="a" style="left:617.3199999999999px;top:1024.2px;width:7px;height:1.6px;background:#85878a;"></div><div class="a" style="left:606.52px;top:1063.8px;width:7px;height:1.6px;background:#85878a;"></div><div class="a" style="left:617.3199999999999px;top:1063.8px;width:7px;height:1.6px;background:#85878a;"></div><div class="a" style="left:606.52px;top:1077.2px;width:7px;height:1.6px;background:#85878a;"></div><div class="a" style="left:617.3199999999999px;top:1077.2px;width:7px;height:1.6px;background:#85878a;"></div><div class="a" style="left:606.52px;top:1090.6000000000001px;width:7px;height:1.6px;background:#85878a;"></div><div class="a" style="left:617.3199999999999px;top:1090.6000000000001px;width:7px;height:1.6px;background:#85878a;"></div><div class="a" style="left:600.52px;top:832.75px;width:30px;height:57.5px;background:linear-gradient(#f3f3f3 0%,#f3f3f3 10%,#a2a2a2 11%,#dddddd 25%,#f8f8f8 27%,#f8f8f8 47.5%,#8c8c8c 48.5%,#8c8c8c 52%,#fdfdfd 53%,#fdfdfd 87.5%,#c8c8c8 88.5%,#c8c8c8 92%,#f0f0f0 93%,#f0f0f0 100%);border:2.2px solid #161616;border-radius:5px;box-shadow:inset 2px 0 1px rgba(0,0,0,.12),inset -2px 0 1px rgba(0,0,0,.12);"></div>
<div class="t" style="left:537.6199999999999px;top:1139.0px;font-size:15px;color:#f2f2f2;font-weight:bold;">USB  1</div>
<div class="a" style="left:655.8799999999999px;top:249px;width:134.0px;height:1029px;background:#3b3f42;box-shadow:inset -1px 0 0 rgba(255,255,255,.05), inset 1px 0 0 rgba(255,255,255,.03);"></div>
<div class="a" style="left:655.8799999999999px;top:472px;width:134.0px;height:97px;background:#313438;border-top:2.2px solid #25272a;border-bottom:2.2px solid #25272a;"></div>
<div class="a" style="left:655.8799999999999px;top:520px;width:134.0px;height:2.2px;background:#25272a;"></div>
<div class="a" style="left:655.8799999999999px;top:569px;width:134.0px;height:1px;background:rgba(255,255,255,.05);"></div>
<div class="a" style="left:655.8799999999999px;top:1171.5px;width:134.0px;height:1px;background:rgba(255,255,255,.04);"></div>
<div class="a" style="left:655.8799999999999px;top:1169.5px;width:134.0px;height:2px;background:#25272b;"></div>
<div class="a" style="left:789.8799999999999px;top:249px;width:2.2px;height:1064px;background:#1e2023;"></div>
<div class="a" style="left:655.8799999999999px;top:1278px;width:134.0px;height:35px;background:#9a2ff2;"></div>
<div class="a" style="left:655.8799999999999px;top:1278px;width:17.5px;height:35px;background:#5b1d92;"></div>
<div class="t" style="left:524.0799999999999px;width:400px;text-align:center;top:1288.3px;font-size:18px;color:#fff;font-weight:bold;text-shadow:none;">Computer R</div>
<svg class="a" style="left:676.28px;top:1175px;filter:drop-shadow(0 0 1.2px #111) drop-shadow(0 0 0.8px #111);" width="90" height="90" viewBox="0 0 90 90"><path fill="#d6d6d6" fill-rule="evenodd" d="M 16.6,10.5 L 76.5,10.5 Q 78,10.5 78,12 L 78,57.7 Q 78,59.2 76.5,59.2 L 16.6,59.2 Q 15.1,59.2 15.1,57.7 L 15.1,12 Q 15.1,10.5 16.6,10.5 Z M 18.8,15.4 L 18.8,48.1 L 73.7,48.1 L 73.7,15.4 Z"/><rect x="18.8" y="15.4" width="54.9" height="32.7" fill="none" stroke="#1a1a1a" stroke-width="1"/><circle cx="45.9" cy="54.1" r="2.3" fill="#111"/><path fill="#d6d6d6" d="M 42,59 L 50.6,59 L 52.4,67.8 L 59,67.8 Q 60.2,67.8 60.2,69 L 60.2,70.3 Q 60.2,71.5 59,71.5 L 33.2,71.5 Q 32,71.5 32,70.3 L 32,69 Q 32,67.8 33.2,67.8 L 40,67.8 Z"/></svg>
<div class="t" style="left:523.0799999999999px;width:400px;text-align:center;top:448.9px;font-size:15px;color:#f2f2f2;font-weight:bold;">Sends</div>
<div class="t" style="left:523.0799999999999px;width:400px;text-align:center;top:481.3px;font-size:15px;color:#f2f2f2;font-weight:bold;">Loopback  1</div>
<div class="a" style="left:668.0799999999999px;top:504.4px;width:110px;height:11px;background:#17191a;border-radius:6px;box-shadow:0 1px 0 rgba(255,255,255,.05);"></div>
<div class="a" style="left:668.0799999999999px;top:504.4px;width:55.0px;height:11px;background:linear-gradient(#c8b8e6,#a996d0);border:1.5px solid #16171a;border-radius:6px 1px 1px 6px;"></div>
<div class="t" style="left:523.0799999999999px;width:400px;text-align:center;top:528.7px;font-size:15px;color:#f2f2f2;font-weight:bold;">Loopback  2</div>
<div class="a" style="left:668.0799999999999px;top:551.7px;width:110px;height:11px;background:#17191a;border-radius:6px;box-shadow:0 1px 0 rgba(255,255,255,.05);"></div>
<div class="a" style="left:665.5799999999999px;top:599.5px;width:115px;height:38px;background:#262626;border:1.5px solid #161617;border-radius:4px;overflow:hidden;"></div>
<svg class="a" style="left:667.0799999999999px;top:601px" width="112" height="35" viewBox="0 0 112 35"><path d="M0,0 L56,35 L112,0 L112,35 L0,35 Z" fill="#1e1e1f"/></svg>
<svg class="a" style="left:665.5799999999999px;top:599.5px" width="115" height="38" viewBox="0 0 115 38"><path d="M113,4 L58,36 L109,36 Q113,36 113,32 Z" fill="#5a9fe2" stroke="#111" stroke-width="1.2"/></svg>
<div class="a" style="left:720.0799999999999px;top:600.5px;width:6px;height:36px;background:#151516;"></div>
<div class="a" style="left:721.0799999999999px;top:601px;width:4px;height:35px;background:#76777a;"></div>
<div class="a" style="left:665.5799999999999px;top:652.3px;width:115px;height:37.2px;background:#303137;border:2px solid #1b1d21;border-radius:4px;"></div>
<div class="a" style="left:722.28px;top:653px;width:1.6px;height:36px;background:#1c1d20;"></div>
<div class="t" style="left:493.5799999999999px;width:400px;text-align:center;top:663.9px;font-size:15.5px;color:#f2f2f2;font-weight:bold;">M</div>
<div class="t" style="left:552.5799999999999px;width:400px;text-align:center;top:663.9px;font-size:15.5px;color:#f2f2f2;font-weight:bold;">S</div>
<svg class="a" style="left:666.5799999999999px;top:710px" width="36" height="20" viewBox="0 0 36 20"><circle cx="10" cy="10" r="8.6" fill="#d6d6d6"/><circle cx="26" cy="10" r="7.6" fill="#3b3f42" stroke="#d6d6d6" stroke-width="1.8"/></svg>
<div class="t" style="left:377.5799999999999px;width:400px;text-align:right;top:712.8px;font-size:15px;color:#f2f2f2;font-weight:bold;">0.00 dB</div>
<div class="t" style="left:291.4799999999999px;width:400px;text-align:right;top:802.0px;font-size:13px;color:#f2f2f2;font-weight:bold;">-3</div>
<div class="t" style="left:291.4799999999999px;width:400px;text-align:right;top:847.7px;font-size:13px;color:#f2f2f2;font-weight:bold;">-6</div>
<div class="t" style="left:291.4799999999999px;width:400px;text-align:right;top:891.5px;font-size:13px;color:#f2f2f2;font-weight:bold;">-9</div>
<div class="t" style="left:291.4799999999999px;width:400px;text-align:right;top:936.7px;font-size:13px;color:#f2f2f2;font-weight:bold;">-12</div>
<div class="t" style="left:291.4799999999999px;width:400px;text-align:right;top:974.8px;font-size:13px;color:#f2f2f2;font-weight:bold;">-20</div>
<div class="t" style="left:291.4799999999999px;width:400px;text-align:right;top:1024.6px;font-size:13px;color:#f2f2f2;font-weight:bold;">-30</div>
<div class="t" style="left:291.4799999999999px;width:400px;text-align:right;top:1067.1px;font-size:13px;color:#f2f2f2;font-weight:bold;">-50</div>
<div class="a" style="left:703.78px;top:749px;width:18px;height:373px;background:#2a2c30;border-radius:2px;"></div><div class="a" style="left:704.78px;top:807.4000000000001px;width:16px;height:1.6px;background:#2b4d66;"></div><div class="a" style="left:704.78px;top:853.1px;width:16px;height:1.6px;background:#2b4d66;"></div><div class="a" style="left:704.78px;top:896.9000000000001px;width:16px;height:1.6px;background:#2b4d66;"></div><div class="a" style="left:704.78px;top:942.1px;width:16px;height:1.6px;background:#2b4d66;"></div><div class="a" style="left:704.78px;top:980.2px;width:16px;height:1.6px;background:#2b4d66;"></div><svg class="a" style="left:703.78px;top:1019px" width="18" height="103" viewBox="0 0 18 103"><rect width="18" height="103" fill="#161a22"/><rect x="1" y="98.40" width="16" height="2.4" fill="#c4d9fb"/><rect x="1" y="94.00" width="16" height="2.4" fill="#c4d9fb"/><rect x="1" y="89.60" width="16" height="2.4" fill="#c4d9fb"/><rect x="1" y="85.20" width="16" height="2.4" fill="#c4d9fb"/><rect x="1" y="80.80" width="16" height="2.4" fill="#c4d9fb"/><rect x="1" y="76.40" width="16" height="2.4" fill="#c4d9fb"/><rect x="1" y="72.00" width="16" height="2.4" fill="#c4d9fb"/><rect x="1" y="67.60" width="16" height="2.4" fill="#c4d9fb"/><rect x="1" y="63.20" width="16" height="2.4" fill="#c4d9fb"/><rect x="1" y="58.80" width="16" height="2.4" fill="#c4d9fb"/><rect x="1" y="54.40" width="16" height="2.4" fill="#c4d9fb"/><rect x="1" y="50.00" width="16" height="2.4" fill="#c4d9fb"/><rect x="1" y="45.60" width="16" height="2.4" fill="#c4d9fb"/><rect x="1" y="41.20" width="16" height="2.4" fill="#c4d9fb"/><rect x="1" y="36.80" width="16" height="2.4" fill="#c4d9fb"/><rect x="1" y="32.40" width="16" height="2.4" fill="#c4d9fb"/><rect x="1" y="28.00" width="16" height="2.4" fill="#c4d9fb"/><rect x="1" y="23.60" width="16" height="2.4" fill="#c4d9fb"/><rect x="1" y="19.20" width="16" height="2.4" fill="#c4d9fb"/><rect x="1" y="14.80" width="16" height="2.4" fill="#c4d9fb"/><rect x="1" y="10.40" width="16" height="2.4" fill="#c4d9fb"/><rect x="1" y="6.00" width="16" height="2.4" fill="#c4d9fb"/><rect x="1" y="1.60" width="16" height="2.4" fill="#c4d9fb"/></svg>
<div class="a" style="left:740.78px;top:886.25px;width:22px;height:235.25px;background:#55575b;border-radius:0 0 4px 4px;"></div><div class="a" style="left:743.78px;top:776px;width:1px;height:56.75px;background:rgba(90,92,96,.2);"></div><div class="a" style="left:758.78px;top:776px;width:1px;height:56.75px;background:rgba(90,92,96,.2);"></div><div class="a" style="left:750.68px;top:776px;width:2.2px;height:320px;background:#111214;"></div><div class="a" style="left:742.78px;top:778.2px;width:7px;height:1.6px;background:#9a9c9f;"></div><div class="a" style="left:753.5799999999999px;top:778.2px;width:7px;height:1.6px;background:#9a9c9f;"></div><div class="a" style="left:742.78px;top:819.2px;width:7px;height:1.6px;background:#9a9c9f;"></div><div class="a" style="left:753.5799999999999px;top:819.2px;width:7px;height:1.6px;background:#9a9c9f;"></div><div class="a" style="left:742.78px;top:860.7px;width:7px;height:1.6px;background:#9a9c9f;"></div><div class="a" style="left:753.5799999999999px;top:860.7px;width:7px;height:1.6px;background:#9a9c9f;"></div><div class="a" style="left:742.78px;top:902.2px;width:7px;height:1.6px;background:#85878a;"></div><div class="a" style="left:753.5799999999999px;top:902.2px;width:7px;height:1.6px;background:#85878a;"></div><div class="a" style="left:742.78px;top:943.2px;width:7px;height:1.6px;background:#85878a;"></div><div class="a" style="left:753.5799999999999px;top:943.2px;width:7px;height:1.6px;background:#85878a;"></div><div class="a" style="left:742.78px;top:984.7px;width:7px;height:1.6px;background:#85878a;"></div><div class="a" style="left:753.5799999999999px;top:984.7px;width:7px;height:1.6px;background:#85878a;"></div><div class="a" style="left:742.78px;top:1024.2px;width:7px;height:1.6px;background:#85878a;"></div><div class="a" style="left:753.5799999999999px;top:1024.2px;width:7px;height:1.6px;background:#85878a;"></div><div class="a" style="left:742.78px;top:1063.8px;width:7px;height:1.6px;background:#85878a;"></div><div class="a" style="left:753.5799999999999px;top:1063.8px;width:7px;height:1.6px;background:#85878a;"></div><div class="a" style="left:742.78px;top:1077.2px;width:7px;height:1.6px;background:#85878a;"></div><div class="a" style="left:753.5799999999999px;top:1077.2px;width:7px;height:1.6px;background:#85878a;"></div><div class="a" style="left:742.78px;top:1090.6000000000001px;width:7px;height:1.6px;background:#85878a;"></div><div class="a" style="left:753.5799999999999px;top:1090.6000000000001px;width:7px;height:1.6px;background:#85878a;"></div><div class="a" style="left:736.78px;top:832.75px;width:30px;height:57.5px;background:linear-gradient(#f3f3f3 0%,#f3f3f3 10%,#a2a2a2 11%,#dddddd 25%,#f8f8f8 27%,#f8f8f8 47.5%,#8c8c8c 48.5%,#8c8c8c 52%,#fdfdfd 53%,#fdfdfd 87.5%,#c8c8c8 88.5%,#c8c8c8 92%,#f0f0f0 93%,#f0f0f0 100%);border:2.2px solid #161616;border-radius:5px;box-shadow:inset 2px 0 1px rgba(0,0,0,.12),inset -2px 0 1px rgba(0,0,0,.12);"></div>
<div class="t" style="left:673.8799999999999px;top:1139.0px;font-size:15px;color:#f2f2f2;font-weight:bold;">USB  2</div>
<div class="a" style="left:792.1399999999999px;top:249px;width:134.0px;height:1029px;background:#3b3f42;box-shadow:inset -1px 0 0 rgba(255,255,255,.05), inset 1px 0 0 rgba(255,255,255,.03);"></div>
<div class="a" style="left:792.1399999999999px;top:472px;width:134.0px;height:97px;background:#313438;border-top:2.2px solid #25272a;border-bottom:2.2px solid #25272a;"></div>
<div class="a" style="left:792.1399999999999px;top:520px;width:134.0px;height:2.2px;background:#25272a;"></div>
<div class="a" style="left:792.1399999999999px;top:569px;width:134.0px;height:1px;background:rgba(255,255,255,.05);"></div>
<div class="a" style="left:792.1399999999999px;top:1171.5px;width:134.0px;height:1px;background:rgba(255,255,255,.04);"></div>
<div class="a" style="left:792.1399999999999px;top:1169.5px;width:134.0px;height:2px;background:#25272b;"></div>
<div class="a" style="left:926.1399999999999px;top:249px;width:2.2px;height:1064px;background:#1e2023;"></div>
<div class="a" style="left:792.1399999999999px;top:1278px;width:134.0px;height:35px;background:#111214;"></div>
<div class="a" style="left:810.1399999999999px;top:1278px;width:116.0px;height:35px;background:#1e2025;"></div>
<div class="t" style="left:659.3399999999999px;width:400px;text-align:center;top:448.9px;font-size:15px;color:#f2f2f2;font-weight:bold;">Sends</div>
<div class="t" style="left:659.3399999999999px;width:400px;text-align:center;top:481.3px;font-size:15px;color:#f2f2f2;font-weight:bold;">Loopback  1</div>
<div class="a" style="left:804.3399999999999px;top:504.4px;width:110px;height:11px;background:#17191a;border-radius:6px;box-shadow:0 1px 0 rgba(255,255,255,.05);"></div>
<div class="t" style="left:659.3399999999999px;width:400px;text-align:center;top:528.7px;font-size:15px;color:#f2f2f2;font-weight:bold;">Loopback  2</div>
<div class="a" style="left:804.3399999999999px;top:551.7px;width:110px;height:11px;background:#17191a;border-radius:6px;box-shadow:0 1px 0 rgba(255,255,255,.05);"></div>
<div class="a" style="left:801.8399999999999px;top:599.5px;width:115px;height:38px;background:#262626;border:1.5px solid #161617;border-radius:4px;overflow:hidden;"></div>
<svg class="a" style="left:803.3399999999999px;top:601px" width="112" height="35" viewBox="0 0 112 35"><path d="M0,0 L56,35 L112,0 L112,35 L0,35 Z" fill="#1e1e1f"/></svg>
<svg class="a" style="left:801.8399999999999px;top:599.5px" width="115" height="38" viewBox="0 0 115 38"><path d="M2,4 L57,36 L6,36 Q2,36 2,32 Z" fill="#5a9fe2" stroke="#111" stroke-width="1.2"/></svg>
<div class="a" style="left:856.3399999999999px;top:600.5px;width:6px;height:36px;background:#151516;"></div>
<div class="a" style="left:857.3399999999999px;top:601px;width:4px;height:35px;background:#76777a;"></div>
<div class="a" style="left:801.8399999999999px;top:652.3px;width:115px;height:37.2px;background:#303137;border:2px solid #1b1d21;border-radius:4px;"></div>
<div class="a" style="left:858.54px;top:653px;width:1.6px;height:36px;background:#1c1d20;"></div>
<div class="t" style="left:629.8399999999999px;width:400px;text-align:center;top:663.9px;font-size:15.5px;color:#f2f2f2;font-weight:bold;">M</div>
<div class="t" style="left:688.8399999999999px;width:400px;text-align:center;top:663.9px;font-size:15.5px;color:#f2f2f2;font-weight:bold;">S</div>
<svg class="a" style="left:802.8399999999999px;top:710px" width="36" height="20" viewBox="0 0 36 20"><circle cx="10" cy="10" r="8.6" fill="#d6d6d6"/><circle cx="26" cy="10" r="7.6" fill="#3b3f42" stroke="#d6d6d6" stroke-width="1.8"/></svg>
<div class="t" style="left:513.8399999999999px;width:400px;text-align:right;top:712.8px;font-size:15px;color:#f2f2f2;font-weight:bold;">0.00 dB</div>
<div class="t" style="left:427.7399999999999px;width:400px;text-align:right;top:802.0px;font-size:13px;color:#f2f2f2;font-weight:bold;">-3</div>
<div class="t" style="left:427.7399999999999px;width:400px;text-align:right;top:847.7px;font-size:13px;color:#f2f2f2;font-weight:bold;">-6</div>
<div class="t" style="left:427.7399999999999px;width:400px;text-align:right;top:891.5px;font-size:13px;color:#f2f2f2;font-weight:bold;">-9</div>
<div class="t" style="left:427.7399999999999px;width:400px;text-align:right;top:936.7px;font-size:13px;color:#f2f2f2;font-weight:bold;">-12</div>
<div class="t" style="left:427.7399999999999px;width:400px;text-align:right;top:974.8px;font-size:13px;color:#f2f2f2;font-weight:bold;">-20</div>
<div class="t" style="left:427.7399999999999px;width:400px;text-align:right;top:1024.6px;font-size:13px;color:#f2f2f2;font-weight:bold;">-30</div>
<div class="t" style="left:427.7399999999999px;width:400px;text-align:right;top:1067.1px;font-size:13px;color:#f2f2f2;font-weight:bold;">-50</div>
<div class="a" style="left:840.04px;top:749px;width:18px;height:373px;background:#2a2c30;border-radius:2px;"></div><div class="a" style="left:841.04px;top:807.4000000000001px;width:16px;height:1.6px;background:#2b4d66;"></div><div class="a" style="left:841.04px;top:853.1px;width:16px;height:1.6px;background:#2b4d66;"></div><div class="a" style="left:841.04px;top:896.9000000000001px;width:16px;height:1.6px;background:#2b4d66;"></div><div class="a" style="left:841.04px;top:942.1px;width:16px;height:1.6px;background:#2b4d66;"></div><div class="a" style="left:841.04px;top:980.2px;width:16px;height:1.6px;background:#2b4d66;"></div><div class="a" style="left:841.04px;top:1030.0px;width:16px;height:1.6px;background:#2b4d66;"></div><div class="a" style="left:841.04px;top:1072.5px;width:16px;height:1.6px;background:#2b4d66;"></div>
<div class="a" style="left:877.04px;top:886.25px;width:22px;height:235.25px;background:#55575b;border-radius:0 0 4px 4px;"></div><div class="a" style="left:880.04px;top:776px;width:1px;height:56.75px;background:rgba(90,92,96,.2);"></div><div class="a" style="left:895.04px;top:776px;width:1px;height:56.75px;background:rgba(90,92,96,.2);"></div><div class="a" style="left:886.9399999999999px;top:776px;width:2.2px;height:320px;background:#111214;"></div><div class="a" style="left:879.04px;top:778.2px;width:7px;height:1.6px;background:#9a9c9f;"></div><div class="a" style="left:889.8399999999999px;top:778.2px;width:7px;height:1.6px;background:#9a9c9f;"></div><div class="a" style="left:879.04px;top:819.2px;width:7px;height:1.6px;background:#9a9c9f;"></div><div class="a" style="left:889.8399999999999px;top:819.2px;width:7px;height:1.6px;background:#9a9c9f;"></div><div class="a" style="left:879.04px;top:860.7px;width:7px;height:1.6px;background:#9a9c9f;"></div><div class="a" style="left:889.8399999999999px;top:860.7px;width:7px;height:1.6px;background:#9a9c9f;"></div><div class="a" style="left:879.04px;top:902.2px;width:7px;height:1.6px;background:#85878a;"></div><div class="a" style="left:889.8399999999999px;top:902.2px;width:7px;height:1.6px;background:#85878a;"></div><div class="a" style="left:879.04px;top:943.2px;width:7px;height:1.6px;background:#85878a;"></div><div class="a" style="left:889.8399999999999px;top:943.2px;width:7px;height:1.6px;background:#85878a;"></div><div class="a" style="left:879.04px;top:984.7px;width:7px;height:1.6px;background:#85878a;"></div><div class="a" style="left:889.8399999999999px;top:984.7px;width:7px;height:1.6px;background:#85878a;"></div><div class="a" style="left:879.04px;top:1024.2px;width:7px;height:1.6px;background:#85878a;"></div><div class="a" style="left:889.8399999999999px;top:1024.2px;width:7px;height:1.6px;background:#85878a;"></div><div class="a" style="left:879.04px;top:1063.8px;width:7px;height:1.6px;background:#85878a;"></div><div class="a" style="left:889.8399999999999px;top:1063.8px;width:7px;height:1.6px;background:#85878a;"></div><div class="a" style="left:879.04px;top:1077.2px;width:7px;height:1.6px;background:#85878a;"></div><div class="a" style="left:889.8399999999999px;top:1077.2px;width:7px;height:1.6px;background:#85878a;"></div><div class="a" style="left:879.04px;top:1090.6000000000001px;width:7px;height:1.6px;background:#85878a;"></div><div class="a" style="left:889.8399999999999px;top:1090.6000000000001px;width:7px;height:1.6px;background:#85878a;"></div><div class="a" style="left:873.04px;top:832.75px;width:30px;height:57.5px;background:linear-gradient(#f3f3f3 0%,#f3f3f3 10%,#a2a2a2 11%,#dddddd 25%,#f8f8f8 27%,#f8f8f8 47.5%,#8c8c8c 48.5%,#8c8c8c 52%,#fdfdfd 53%,#fdfdfd 87.5%,#c8c8c8 88.5%,#c8c8c8 92%,#f0f0f0 93%,#f0f0f0 100%);border:2.2px solid #161616;border-radius:5px;box-shadow:inset 2px 0 1px rgba(0,0,0,.12),inset -2px 0 1px rgba(0,0,0,.12);"></div>
<div class="t" style="left:810.1399999999999px;top:1139.0px;font-size:15px;color:#f2f2f2;font-weight:bold;">USB  3</div>
<div class="a" style="left:928.3999999999999px;top:249px;width:134.0px;height:1029px;background:#3b3f42;box-shadow:inset -1px 0 0 rgba(255,255,255,.05), inset 1px 0 0 rgba(255,255,255,.03);"></div>
<div class="a" style="left:928.3999999999999px;top:472px;width:134.0px;height:97px;background:#313438;border-top:2.2px solid #25272a;border-bottom:2.2px solid #25272a;"></div>
<div class="a" style="left:928.3999999999999px;top:520px;width:134.0px;height:2.2px;background:#25272a;"></div>
<div class="a" style="left:928.3999999999999px;top:569px;width:134.0px;height:1px;background:rgba(255,255,255,.05);"></div>
<div class="a" style="left:928.3999999999999px;top:1171.5px;width:134.0px;height:1px;background:rgba(255,255,255,.04);"></div>
<div class="a" style="left:928.3999999999999px;top:1169.5px;width:134.0px;height:2px;background:#25272b;"></div>
<div class="a" style="left:1062.3999999999999px;top:249px;width:2.2px;height:1064px;background:#1e2023;"></div>
<div class="a" style="left:928.3999999999999px;top:1278px;width:134.0px;height:35px;background:#111214;"></div>
<div class="a" style="left:946.3999999999999px;top:1278px;width:116.0px;height:35px;background:#1e2025;"></div>
<div class="t" style="left:795.5999999999999px;width:400px;text-align:center;top:448.9px;font-size:15px;color:#f2f2f2;font-weight:bold;">Sends</div>
<div class="t" style="left:795.5999999999999px;width:400px;text-align:center;top:481.3px;font-size:15px;color:#f2f2f2;font-weight:bold;">Loopback  1</div>
<div class="a" style="left:940.5999999999999px;top:504.4px;width:110px;height:11px;background:#17191a;border-radius:6px;box-shadow:0 1px 0 rgba(255,255,255,.05);"></div>
<div class="t" style="left:795.5999999999999px;width:400px;text-align:center;top:528.7px;font-size:15px;color:#f2f2f2;font-weight:bold;">Loopback  2</div>
<div class="a" style="left:940.5999999999999px;top:551.7px;width:110px;height:11px;background:#17191a;border-radius:6px;box-shadow:0 1px 0 rgba(255,255,255,.05);"></div>
<div class="a" style="left:938.0999999999999px;top:599.5px;width:115px;height:38px;background:#262626;border:1.5px solid #161617;border-radius:4px;overflow:hidden;"></div>
<svg class="a" style="left:939.5999999999999px;top:601px" width="112" height="35" viewBox="0 0 112 35"><path d="M0,0 L56,35 L112,0 L112,35 L0,35 Z" fill="#1e1e1f"/></svg>
<svg class="a" style="left:938.0999999999999px;top:599.5px" width="115" height="38" viewBox="0 0 115 38"><path d="M113,4 L58,36 L109,36 Q113,36 113,32 Z" fill="#5a9fe2" stroke="#111" stroke-width="1.2"/></svg>
<div class="a" style="left:992.5999999999999px;top:600.5px;width:6px;height:36px;background:#151516;"></div>
<div class="a" style="left:993.5999999999999px;top:601px;width:4px;height:35px;background:#76777a;"></div>
<div class="a" style="left:938.0999999999999px;top:652.3px;width:115px;height:37.2px;background:#303137;border:2px solid #1b1d21;border-radius:4px;"></div>
<div class="a" style="left:994.8px;top:653px;width:1.6px;height:36px;background:#1c1d20;"></div>
<div class="t" style="left:766.0999999999999px;width:400px;text-align:center;top:663.9px;font-size:15.5px;color:#f2f2f2;font-weight:bold;">M</div>
<div class="t" style="left:825.0999999999999px;width:400px;text-align:center;top:663.9px;font-size:15.5px;color:#f2f2f2;font-weight:bold;">S</div>
<svg class="a" style="left:939.0999999999999px;top:710px" width="36" height="20" viewBox="0 0 36 20"><circle cx="10" cy="10" r="8.6" fill="#d6d6d6"/><circle cx="26" cy="10" r="7.6" fill="#3b3f42" stroke="#d6d6d6" stroke-width="1.8"/></svg>
<div class="t" style="left:650.0999999999999px;width:400px;text-align:right;top:712.8px;font-size:15px;color:#f2f2f2;font-weight:bold;">0.00 dB</div>
<div class="t" style="left:563.9999999999999px;width:400px;text-align:right;top:802.0px;font-size:13px;color:#f2f2f2;font-weight:bold;">-3</div>
<div class="t" style="left:563.9999999999999px;width:400px;text-align:right;top:847.7px;font-size:13px;color:#f2f2f2;font-weight:bold;">-6</div>
<div class="t" style="left:563.9999999999999px;width:400px;text-align:right;top:891.5px;font-size:13px;color:#f2f2f2;font-weight:bold;">-9</div>
<div class="t" style="left:563.9999999999999px;width:400px;text-align:right;top:936.7px;font-size:13px;color:#f2f2f2;font-weight:bold;">-12</div>
<div class="t" style="left:563.9999999999999px;width:400px;text-align:right;top:974.8px;font-size:13px;color:#f2f2f2;font-weight:bold;">-20</div>
<div class="t" style="left:563.9999999999999px;width:400px;text-align:right;top:1024.6px;font-size:13px;color:#f2f2f2;font-weight:bold;">-30</div>
<div class="t" style="left:563.9999999999999px;width:400px;text-align:right;top:1067.1px;font-size:13px;color:#f2f2f2;font-weight:bold;">-50</div>
<div class="a" style="left:976.3px;top:749px;width:18px;height:373px;background:#2a2c30;border-radius:2px;"></div><div class="a" style="left:977.3px;top:807.4000000000001px;width:16px;height:1.6px;background:#2b4d66;"></div><div class="a" style="left:977.3px;top:853.1px;width:16px;height:1.6px;background:#2b4d66;"></div><div class="a" style="left:977.3px;top:896.9000000000001px;width:16px;height:1.6px;background:#2b4d66;"></div><div class="a" style="left:977.3px;top:942.1px;width:16px;height:1.6px;background:#2b4d66;"></div><div class="a" style="left:977.3px;top:980.2px;width:16px;height:1.6px;background:#2b4d66;"></div><div class="a" style="left:977.3px;top:1030.0px;width:16px;height:1.6px;background:#2b4d66;"></div><div class="a" style="left:977.3px;top:1072.5px;width:16px;height:1.6px;background:#2b4d66;"></div>
<div class="a" style="left:1013.3px;top:886.25px;width:22px;height:235.25px;background:#55575b;border-radius:0 0 4px 4px;"></div><div class="a" style="left:1016.3px;top:776px;width:1px;height:56.75px;background:rgba(90,92,96,.2);"></div><div class="a" style="left:1031.3px;top:776px;width:1px;height:56.75px;background:rgba(90,92,96,.2);"></div><div class="a" style="left:1023.1999999999999px;top:776px;width:2.2px;height:320px;background:#111214;"></div><div class="a" style="left:1015.3px;top:778.2px;width:7px;height:1.6px;background:#9a9c9f;"></div><div class="a" style="left:1026.1px;top:778.2px;width:7px;height:1.6px;background:#9a9c9f;"></div><div class="a" style="left:1015.3px;top:819.2px;width:7px;height:1.6px;background:#9a9c9f;"></div><div class="a" style="left:1026.1px;top:819.2px;width:7px;height:1.6px;background:#9a9c9f;"></div><div class="a" style="left:1015.3px;top:860.7px;width:7px;height:1.6px;background:#9a9c9f;"></div><div class="a" style="left:1026.1px;top:860.7px;width:7px;height:1.6px;background:#9a9c9f;"></div><div class="a" style="left:1015.3px;top:902.2px;width:7px;height:1.6px;background:#85878a;"></div><div class="a" style="left:1026.1px;top:902.2px;width:7px;height:1.6px;background:#85878a;"></div><div class="a" style="left:1015.3px;top:943.2px;width:7px;height:1.6px;background:#85878a;"></div><div class="a" style="left:1026.1px;top:943.2px;width:7px;height:1.6px;background:#85878a;"></div><div class="a" style="left:1015.3px;top:984.7px;width:7px;height:1.6px;background:#85878a;"></div><div class="a" style="left:1026.1px;top:984.7px;width:7px;height:1.6px;background:#85878a;"></div><div class="a" style="left:1015.3px;top:1024.2px;width:7px;height:1.6px;background:#85878a;"></div><div class="a" style="left:1026.1px;top:1024.2px;width:7px;height:1.6px;background:#85878a;"></div><div class="a" style="left:1015.3px;top:1063.8px;width:7px;height:1.6px;background:#85878a;"></div><div class="a" style="left:1026.1px;top:1063.8px;width:7px;height:1.6px;background:#85878a;"></div><div class="a" style="left:1015.3px;top:1077.2px;width:7px;height:1.6px;background:#85878a;"></div><div class="a" style="left:1026.1px;top:1077.2px;width:7px;height:1.6px;background:#85878a;"></div><div class="a" style="left:1015.3px;top:1090.6000000000001px;width:7px;height:1.6px;background:#85878a;"></div><div class="a" style="left:1026.1px;top:1090.6000000000001px;width:7px;height:1.6px;background:#85878a;"></div><div class="a" style="left:1009.3px;top:832.75px;width:30px;height:57.5px;background:linear-gradient(#f3f3f3 0%,#f3f3f3 10%,#a2a2a2 11%,#dddddd 25%,#f8f8f8 27%,#f8f8f8 47.5%,#8c8c8c 48.5%,#8c8c8c 52%,#fdfdfd 53%,#fdfdfd 87.5%,#c8c8c8 88.5%,#c8c8c8 92%,#f0f0f0 93%,#f0f0f0 100%);border:2.2px solid #161616;border-radius:5px;box-shadow:inset 2px 0 1px rgba(0,0,0,.12),inset -2px 0 1px rgba(0,0,0,.12);"></div>
<div class="t" style="left:946.3999999999999px;top:1139.0px;font-size:15px;color:#f2f2f2;font-weight:bold;">USB  4</div>
<div class="a" style="left:1062.4px;top:249px;width:415.5999999999999px;height:1064px;background:#212429;"></div>
<div class="a" style="left:1478px;top:249px;width:133.70000000000005px;height:1064px;background:#2d3035;"></div>
<div class="a" style="left:1611.7px;top:249px;width:1.7000000000000455px;height:1064px;background:#1c1e21;"></div>
<div class="a" style="left:1613.4px;top:249px;width:133.89999999999986px;height:1064px;background:#2a2d32;"></div>
<div class="a" style="left:1747.3px;top:190px;width:1.2px;height:1123px;background:#5a5b5e;"></div>
<div class="a" style="left:1613.4px;top:249px;width:133.89999999999986px;height:36px;background:linear-gradient(#23252a,#26292d);"></div>
<div class="a" style="left:1613.4px;top:285px;width:133.89999999999986px;height:6px;background:linear-gradient(rgba(30,32,36,.6),rgba(42,45,50,0));"></div>
<div class="t" style="left:1344.5px;width:400px;text-align:center;top:260.6px;font-size:14.6px;color:#f2f2f2;font-weight:bold;">Return Select</div>
<div class="t" style="left:1480.5px;width:400px;text-align:center;top:260.5px;font-size:14.8px;color:#f2f2f2;font-weight:bold;">H/W Controls</div>
<div class="a" style="left:1486.5px;top:288.7px;width:115.3px;height:45px;background:#5a9fe0;border:2px solid #16181c;border-radius:4px;"></div>
<div class="t" style="left:1344px;width:400px;text-align:center;top:303.7px;font-size:15px;color:#1d2633;font-weight:bold;text-shadow:none;">Loopback  1</div>
<div class="a" style="left:1486.5px;top:349.7px;width:115.3px;height:45px;background:#2c2e33;border:2px solid #1c1d21;border-radius:4px;"></div>
<div class="t" style="left:1344px;width:400px;text-align:center;top:365.3px;font-size:15px;color:#f2f2f2;font-weight:bold;">Loopback  2</div>
<svg style="position:absolute;left:1621.2px;top:303.6px" width="44" height="44" viewBox="0 0 44 44"><circle cx="22.0" cy="22.6" r="20.6" fill="#19191a"/><circle cx="22.0" cy="22.0" r="13" fill="#2a2829"/><path d="M10.91,34.75 A16.9,16.9 0 1 1 34.16,33.74" fill="none" stroke="#0a0a0b" stroke-width="5.2"/><path d="M10.91,34.75 A16.9,16.9 0 1 1 34.16,33.74" fill="none" stroke="#55b9f2" stroke-width="3.5"/><line x1="22.68" y1="22.73" x2="29.37" y2="29.90" stroke="#ececec" stroke-width="3.3" /></svg>
<div class="t" style="left:1671.9px;top:308.1px;font-size:15px;color:#f2f2f2;font-weight:bold;">Main Out</div>
<div class="t" style="left:1671.9px;top:329.3px;font-size:15px;color:#4aaff0;font-weight:bold;">0.0 dB</div>
<div class="a" style="left:1613.4px;top:368.3px;width:133.89999999999986px;height:1.2px;background:#24262a;"></div>
<svg style="position:absolute;left:1620.5px;top:385.8px" width="44" height="44" viewBox="0 0 44 44"><circle cx="22.0" cy="22.6" r="20.6" fill="#19191a"/><circle cx="22.0" cy="22.0" r="13" fill="#2a2829"/><path d="M10.91,34.75 A16.9,16.9 0 0 1 6.12,16.22" fill="none" stroke="#0a0a0b" stroke-width="5.2"/><path d="M10.91,34.75 A16.9,16.9 0 0 1 6.12,16.22" fill="none" stroke="#55b9f2" stroke-width="3.5"/><line x1="21.09" y1="21.58" x2="12.21" y2="17.44" stroke="#ececec" stroke-width="3.3" /></svg>
<div class="t" style="left:1671.9px;top:390.3px;font-size:15px;color:#f2f2f2;font-weight:bold;">Phones</div>
<div class="t" style="left:1671.9px;top:411.3px;font-size:15px;color:#4aaff0;font-weight:bold;">-33.3 dB</div>
<div class="a" style="left:1613.4px;top:450px;width:133.89999999999986px;height:1.2px;background:#24262a;"></div>
<div class="a" style="left:1623.6px;top:473.2px;width:113.6px;height:36px;background:#2e3036;border:2px solid #1b1c1f;border-radius:4px;"></div>
<div class="t" style="left:1480.2px;width:400px;text-align:center;top:483.6px;font-size:16px;color:#f2f2f2;font-weight:bold;">Dim</div>
<div class="a" style="left:1613.4px;top:532.5px;width:133.89999999999986px;height:2px;background:#1e2024;"></div>
<div class="a" style="left:1613.4px;top:534.5px;width:133.89999999999986px;height:622.5px;background:#2f3237;"></div>
<div class="a" style="left:1487.55px;top:809.8px;width:114.7px;height:36.7px;background:#2c2e33;border:2px solid #1b1c1f;border-radius:4px;overflow:hidden;"></div>
<div class="a" style="left:1544.05px;top:810px;width:1.6px;height:36px;background:#1b1c1f;"></div>
<div class="t" style="left:1315.85px;width:400px;text-align:center;top:821.3px;font-size:15px;color:#f2f2f2;font-weight:bold;">M</div>
<svg class="a" style="left:1562.35px;top:815.5px" width="24" height="24" viewBox="0 0 24 24"><path d="M 3.6,14 L 3.6,11.5 A 8.4,8.4 0 0 1 20.4,11.5 L 20.4,14" fill="none" stroke="#e6e6e6" stroke-width="2.6"/><path d="M 1.8,14.5 Q 1.8,12.2 4,12.2 L 5,12.2 L 5,20.5 Q 1.8,19.8 1.8,17.5 Z" fill="#e6e6e6"/><path d="M 22.2,14.5 Q 22.2,12.2 20,12.2 L 19,12.2 L 19,20.5 Q 22.2,19.8 22.2,17.5 Z" fill="#e6e6e6"/><rect x="5.6" y="10.8" width="3.4" height="11.2" rx="1.7" fill="#e6e6e6" stroke="#2c2e33" stroke-width="0.9"/><rect x="15" y="10.8" width="3.4" height="11.2" rx="1.7" fill="#e6e6e6" stroke="#2c2e33" stroke-width="0.9"/></svg>
<svg class="a" style="left:1488.85px;top:866px" width="36" height="20" viewBox="0 0 36 20"><circle cx="10" cy="10" r="8.2" fill="#d6d6d6"/><circle cx="25" cy="10" r="7.6" fill="#2d3035" stroke="#d6d6d6" stroke-width="1.8"/></svg>
<div class="t" style="left:1199.85px;width:400px;text-align:right;top:869.3px;font-size:15px;color:#f2f2f2;font-weight:bold;">0.00 dB</div>
<div class="t" style="left:1113.55px;width:400px;text-align:right;top:939.4px;font-size:12.5px;color:#f2f2f2;font-weight:bold;">-3</div>
<div class="t" style="left:1113.55px;width:400px;text-align:right;top:962.7px;font-size:12.5px;color:#f2f2f2;font-weight:bold;">-6</div>
<div class="t" style="left:1113.55px;width:400px;text-align:right;top:986.0px;font-size:12.5px;color:#f2f2f2;font-weight:bold;">-9</div>
<div class="t" style="left:1113.55px;width:400px;text-align:right;top:1010.0px;font-size:12.5px;color:#f2f2f2;font-weight:bold;">-12</div>
<div class="t" style="left:1113.55px;width:400px;text-align:right;top:1030.1px;font-size:12.5px;color:#f2f2f2;font-weight:bold;">-20</div>
<div class="t" style="left:1113.55px;width:400px;text-align:right;top:1055.7px;font-size:12.5px;color:#f2f2f2;font-weight:bold;">-30</div>
<div class="t" style="left:1113.55px;width:400px;text-align:right;top:1077.9px;font-size:12.5px;color:#f2f2f2;font-weight:bold;">-50</div>
<div class="a" style="left:1526.6499999999999px;top:906.5px;width:18px;height:203.0999999999999px;background:#2a2c30;border-radius:2px;"></div><div class="a" style="left:1527.6499999999999px;top:943.7px;width:16px;height:1.6px;background:#2b4d66;"></div><div class="a" style="left:1527.6499999999999px;top:967.0px;width:16px;height:1.6px;background:#2b4d66;"></div><div class="a" style="left:1527.6499999999999px;top:990.3000000000001px;width:16px;height:1.6px;background:#2b4d66;"></div><div class="a" style="left:1527.6499999999999px;top:1014.3000000000001px;width:16px;height:1.6px;background:#2b4d66;"></div><div class="a" style="left:1527.6499999999999px;top:1034.4px;width:16px;height:1.6px;background:#2b4d66;"></div><div class="a" style="left:1527.6499999999999px;top:1060.0px;width:16px;height:1.6px;background:#2b4d66;"></div><svg class="a" style="left:1526.6499999999999px;top:1068px" width="18" height="41.59999999999991" viewBox="0 0 18 41.59999999999991"><rect width="18" height="41.59999999999991" fill="#161a22"/><rect x="1" y="37.00" width="16" height="2.4" fill="#c4d9fb"/><rect x="1" y="32.60" width="16" height="2.4" fill="#c4d9fb"/><rect x="1" y="28.20" width="16" height="2.4" fill="#c4d9fb"/><rect x="1" y="23.80" width="16" height="2.4" fill="#c4d9fb"/><rect x="1" y="19.40" width="16" height="2.4" fill="#c4d9fb"/><rect x="1" y="15.00" width="16" height="2.4" fill="#c4d9fb"/><rect x="1" y="10.60" width="16" height="2.4" fill="#c4d9fb"/><rect x="1" y="6.20" width="16" height="2.4" fill="#c4d9fb"/><rect x="1" y="1.80" width="16" height="2.4" fill="#c4d9fb"/></svg>
<div class="a" style="left:1562.55px;top:996.35px;width:21px;height:113.24999999999989px;background:#55575b;border-radius:0 0 4px 4px;"></div><div class="a" style="left:1565.05px;top:919.3px;width:1px;height:25.350000000000023px;background:rgba(90,92,96,.2);"></div><div class="a" style="left:1580.05px;top:919.3px;width:1px;height:25.350000000000023px;background:rgba(90,92,96,.2);"></div><div class="a" style="left:1571.95px;top:919.3px;width:2.2px;height:176.10000000000014px;background:#111214;"></div><div class="a" style="left:1564.05px;top:934.8000000000001px;width:7px;height:1.6px;background:#9a9c9f;"></div><div class="a" style="left:1574.85px;top:934.8000000000001px;width:7px;height:1.6px;background:#9a9c9f;"></div><div class="a" style="left:1564.05px;top:1011.1px;width:7px;height:1.6px;background:#85878a;"></div><div class="a" style="left:1574.85px;top:1011.1px;width:7px;height:1.6px;background:#85878a;"></div><div class="a" style="left:1564.05px;top:1030.0px;width:7px;height:1.6px;background:#85878a;"></div><div class="a" style="left:1574.85px;top:1030.0px;width:7px;height:1.6px;background:#85878a;"></div><div class="a" style="left:1564.05px;top:1049.2px;width:7px;height:1.6px;background:#85878a;"></div><div class="a" style="left:1574.85px;top:1049.2px;width:7px;height:1.6px;background:#85878a;"></div><div class="a" style="left:1564.05px;top:1067.1000000000001px;width:7px;height:1.6px;background:#85878a;"></div><div class="a" style="left:1574.85px;top:1067.1000000000001px;width:7px;height:1.6px;background:#85878a;"></div><div class="a" style="left:1564.05px;top:1080.2px;width:7px;height:1.6px;background:#85878a;"></div><div class="a" style="left:1574.85px;top:1080.2px;width:7px;height:1.6px;background:#85878a;"></div><div class="a" style="left:1559.05px;top:944.65px;width:28px;height:55.7px;background:linear-gradient(#6ac4e8 0%,#6ac4e8 9%,#3d7fa2 11%,#4a9bc4 25%,#56acda 30%,#58aedb 47%,#5b7f82 48.5%,#5b7f82 52%,#55a9d6 53%,#55a9d6 86%,#3f84aa 88%,#3f84aa 92%,#5fb6e0 93%,#5fb6e0 100%);border:2.2px solid #10222e;border-radius:5px;box-shadow:inset 2px 0 1px rgba(0,0,0,.12),inset -2px 0 1px rgba(0,0,0,.12);"></div>
<div class="t" style="left:1496px;top:1127.6px;font-size:15px;color:#f2f2f2;font-weight:bold;">Loopback  1</div>
<div class="a" style="left:1478px;top:1157.3px;width:133.70000000000005px;height:2px;background:#1f2125;"></div>
<div class="a" style="left:1478px;top:1159.3px;width:133.70000000000005px;height:108.20000000000005px;background:#2c2f34;"></div>
<div class="a" style="left:1478px;top:1267.3px;width:133.70000000000005px;height:36.7px;background:#e3f52b;"></div>
<div class="a" style="left:1478px;top:1267.3px;width:17.5px;height:36.7px;background:#8a951c;"></div>
<div class="t" style="left:1344.85px;width:400px;text-align:center;top:1277.3px;font-size:18px;color:#111;font-weight:bold;text-shadow:none;">Stream</div>
<svg class="a" style="left:1500px;top:1160px;filter:drop-shadow(0 0 1.2px #111) drop-shadow(0 0 0.8px #111);" width="90" height="90" viewBox="0 0 90 90"><g fill="#d6d6d6" stroke="#161616" stroke-width="1.7" stroke-linejoin="round"><path d="M 21,31 Q 17.5,39 17.3,49.5 L 23.5,49.5 Q 24,40.5 28.8,34.5 Z"/><path d="M 68,31 Q 71.5,39 71.7,49.5 L 65.5,49.5 Q 65,40.5 60.2,34.5 Z"/><path d="M 12.8,53.5 Q 13.2,48.8 18.5,48.6 L 23.2,48.6 L 23.2,70.5 Q 14,68 12.8,62.5 Z"/><path d="M 76.2,53.5 Q 75.8,48.8 70.5,48.6 L 65.8,48.6 L 65.8,70.5 Q 75,68 76.2,62.5 Z"/><path d="M 24,30.5 Q 29,15.3 44.5,15.3 Q 60,15.3 65,30.5 Q 65,33.5 61.5,34.5 Q 55,27.2 44.5,27.2 Q 34,27.2 27.5,34.5 Q 24,33.5 24,30.5 Z"/><rect x="23.7" y="44.4" width="8.4" height="29" rx="4.2"/><rect x="56.9" y="44.4" width="8.4" height="29" rx="4.2"/></g></svg>
<div class="a" style="left:1478px;top:1304px;width:133.70000000000005px;height:9px;background:#24272b;"></div>
<div class="a" style="left:1623.05px;top:809.8px;width:114.7px;height:36.7px;background:#2c2e33;border:2px solid #1b1c1f;border-radius:4px;overflow:hidden;"></div>
<div class="a" style="left:1681.1499999999999px;top:811.3px;width:55px;height:33.7px;background:#5a9fe0;border-radius:0 4px 4px 0;"></div>
<div class="a" style="left:1679.55px;top:810px;width:1.6px;height:36px;background:#1b1c1f;"></div>
<div class="t" style="left:1451.35px;width:400px;text-align:center;top:821.3px;font-size:15px;color:#f2f2f2;font-weight:bold;">M</div>
<svg class="a" style="left:1697.85px;top:815.5px" width="24" height="24" viewBox="0 0 24 24"><path d="M 3.6,14 L 3.6,11.5 A 8.4,8.4 0 0 1 20.4,11.5 L 20.4,14" fill="none" stroke="#1d2633" stroke-width="2.6"/><path d="M 1.8,14.5 Q 1.8,12.2 4,12.2 L 5,12.2 L 5,20.5 Q 1.8,19.8 1.8,17.5 Z" fill="#1d2633"/><path d="M 22.2,14.5 Q 22.2,12.2 20,12.2 L 19,12.2 L 19,20.5 Q 22.2,19.8 22.2,17.5 Z" fill="#1d2633"/><rect x="5.6" y="10.8" width="3.4" height="11.2" rx="1.7" fill="#1d2633" stroke="#5a9fe0" stroke-width="0.9"/><rect x="15" y="10.8" width="3.4" height="11.2" rx="1.7" fill="#1d2633" stroke="#5a9fe0" stroke-width="0.9"/></svg>
<svg class="a" style="left:1624.35px;top:866px" width="36" height="20" viewBox="0 0 36 20"><circle cx="10" cy="10" r="8.2" fill="#d6d6d6"/><circle cx="25" cy="10" r="7.6" fill="#2d3035" stroke="#d6d6d6" stroke-width="1.8"/></svg>
<div class="t" style="left:1335.35px;width:400px;text-align:right;top:869.3px;font-size:15px;color:#f2f2f2;font-weight:bold;">0.00 dB</div>
<div class="t" style="left:1249.05px;width:400px;text-align:right;top:939.4px;font-size:12.5px;color:#f2f2f2;font-weight:bold;">-3</div>
<div class="t" style="left:1249.05px;width:400px;text-align:right;top:962.7px;font-size:12.5px;color:#f2f2f2;font-weight:bold;">-6</div>
<div class="t" style="left:1249.05px;width:400px;text-align:right;top:986.0px;font-size:12.5px;color:#f2f2f2;font-weight:bold;">-9</div>
<div class="t" style="left:1249.05px;width:400px;text-align:right;top:1010.0px;font-size:12.5px;color:#f2f2f2;font-weight:bold;">-12</div>
<div class="t" style="left:1249.05px;width:400px;text-align:right;top:1030.1px;font-size:12.5px;color:#f2f2f2;font-weight:bold;">-20</div>
<div class="t" style="left:1249.05px;width:400px;text-align:right;top:1055.7px;font-size:12.5px;color:#f2f2f2;font-weight:bold;">-30</div>
<div class="t" style="left:1249.05px;width:400px;text-align:right;top:1077.9px;font-size:12.5px;color:#f2f2f2;font-weight:bold;">-50</div>
<div class="a" style="left:1662.1499999999999px;top:906.5px;width:18px;height:203.0999999999999px;background:#2a2c30;border-radius:2px;"></div><div class="a" style="left:1663.1499999999999px;top:943.7px;width:16px;height:1.6px;background:#2b4d66;"></div><div class="a" style="left:1663.1499999999999px;top:967.0px;width:16px;height:1.6px;background:#2b4d66;"></div><div class="a" style="left:1663.1499999999999px;top:990.3000000000001px;width:16px;height:1.6px;background:#2b4d66;"></div><div class="a" style="left:1663.1499999999999px;top:1014.3000000000001px;width:16px;height:1.6px;background:#2b4d66;"></div><div class="a" style="left:1663.1499999999999px;top:1034.4px;width:16px;height:1.6px;background:#2b4d66;"></div><svg class="a" style="left:1662.1499999999999px;top:1052px" width="18" height="57.59999999999991" viewBox="0 0 18 57.59999999999991"><rect width="18" height="57.59999999999991" fill="#161a22"/><rect x="1" y="53.00" width="16" height="2.4" fill="#c4d9fb"/><rect x="1" y="48.60" width="16" height="2.4" fill="#c4d9fb"/><rect x="1" y="44.20" width="16" height="2.4" fill="#c4d9fb"/><rect x="1" y="39.80" width="16" height="2.4" fill="#c4d9fb"/><rect x="1" y="35.40" width="16" height="2.4" fill="#c4d9fb"/><rect x="1" y="31.00" width="16" height="2.4" fill="#c4d9fb"/><rect x="1" y="26.60" width="16" height="2.4" fill="#c4d9fb"/><rect x="1" y="22.20" width="16" height="2.4" fill="#c4d9fb"/><rect x="1" y="17.80" width="16" height="2.4" fill="#c4d9fb"/><rect x="1" y="13.40" width="16" height="2.4" fill="#c4d9fb"/><rect x="1" y="9.00" width="16" height="2.4" fill="#c4d9fb"/><rect x="1" y="4.60" width="16" height="2.4" fill="#c4d9fb"/></svg>
<div class="a" style="left:1698.05px;top:996.35px;width:21px;height:113.24999999999989px;background:#55575b;border-radius:0 0 4px 4px;"></div><div class="a" style="left:1700.55px;top:919.3px;width:1px;height:25.350000000000023px;background:rgba(90,92,96,.2);"></div><div class="a" style="left:1715.55px;top:919.3px;width:1px;height:25.350000000000023px;background:rgba(90,92,96,.2);"></div><div class="a" style="left:1707.45px;top:919.3px;width:2.2px;height:176.10000000000014px;background:#111214;"></div><div class="a" style="left:1699.55px;top:934.8000000000001px;width:7px;height:1.6px;background:#9a9c9f;"></div><div class="a" style="left:1710.35px;top:934.8000000000001px;width:7px;height:1.6px;background:#9a9c9f;"></div><div class="a" style="left:1699.55px;top:1011.1px;width:7px;height:1.6px;background:#85878a;"></div><div class="a" style="left:1710.35px;top:1011.1px;width:7px;height:1.6px;background:#85878a;"></div><div class="a" style="left:1699.55px;top:1030.0px;width:7px;height:1.6px;background:#85878a;"></div><div class="a" style="left:1710.35px;top:1030.0px;width:7px;height:1.6px;background:#85878a;"></div><div class="a" style="left:1699.55px;top:1049.2px;width:7px;height:1.6px;background:#85878a;"></div><div class="a" style="left:1710.35px;top:1049.2px;width:7px;height:1.6px;background:#85878a;"></div><div class="a" style="left:1699.55px;top:1067.1000000000001px;width:7px;height:1.6px;background:#85878a;"></div><div class="a" style="left:1710.35px;top:1067.1000000000001px;width:7px;height:1.6px;background:#85878a;"></div><div class="a" style="left:1699.55px;top:1080.2px;width:7px;height:1.6px;background:#85878a;"></div><div class="a" style="left:1710.35px;top:1080.2px;width:7px;height:1.6px;background:#85878a;"></div><div class="a" style="left:1694.55px;top:944.65px;width:28px;height:55.7px;background:linear-gradient(#6ac4e8 0%,#6ac4e8 9%,#3d7fa2 11%,#4a9bc4 25%,#56acda 30%,#58aedb 47%,#5b7f82 48.5%,#5b7f82 52%,#55a9d6 53%,#55a9d6 86%,#3f84aa 88%,#3f84aa 92%,#5fb6e0 93%,#5fb6e0 100%);border:2.2px solid #10222e;border-radius:5px;box-shadow:inset 2px 0 1px rgba(0,0,0,.12),inset -2px 0 1px rgba(0,0,0,.12);"></div>
<div class="t" style="left:1631.4px;top:1127.6px;font-size:15px;color:#f2f2f2;font-weight:bold;">Out  1/2</div>
<div class="a" style="left:1613.4px;top:1157.3px;width:133.89999999999986px;height:2px;background:#1f2125;"></div>
<div class="a" style="left:1613.4px;top:1159.3px;width:133.89999999999986px;height:108.20000000000005px;background:#2c2f34;"></div>
<div class="a" style="left:1613.4px;top:1267.3px;width:133.89999999999986px;height:36.7px;background:#f7282a;"></div>
<div class="a" style="left:1613.4px;top:1267.3px;width:17.5px;height:36.7px;background:#8c1a1b;"></div>
<div class="t" style="left:1480.35px;width:400px;text-align:center;top:1277.3px;font-size:18px;color:#111;font-weight:bold;text-shadow:none;">Main</div>
<svg class="a" style="left:1635px;top:1170px;filter:drop-shadow(0 0 1.2px #111) drop-shadow(0 0 0.8px #111);" width="90" height="70" viewBox="0 0 90 70"><rect x="13.9" y="14.1" width="24.5" height="39.8" rx="1.2" fill="#d8d8d8"/><circle cx="26.1" cy="25.4" r="7" fill="none" stroke="#141414" stroke-width="1.9"/><circle cx="26.1" cy="25.4" r="3.9" fill="#fafafa" stroke="#141414" stroke-width="1.6"/><circle cx="26.1" cy="42.9" r="7" fill="none" stroke="#141414" stroke-width="1.9"/><circle cx="26.1" cy="42.9" r="3.9" fill="#fafafa" stroke="#141414" stroke-width="1.6"/><circle cx="18.0" cy="18.0" r="0.9" fill="#555"/><circle cx="34.0" cy="18.0" r="0.9" fill="#555"/><circle cx="18.0" cy="49.9" r="0.9" fill="#555"/><circle cx="34.0" cy="49.9" r="0.9" fill="#555"/><rect x="53.0" y="14.1" width="24.5" height="39.8" rx="1.2" fill="#d8d8d8"/><circle cx="65.2" cy="25.4" r="7" fill="none" stroke="#141414" stroke-width="1.9"/><circle cx="65.2" cy="25.4" r="3.9" fill="#fafafa" stroke="#141414" stroke-width="1.6"/><circle cx="65.2" cy="42.9" r="7" fill="none" stroke="#141414" stroke-width="1.9"/><circle cx="65.2" cy="42.9" r="3.9" fill="#fafafa" stroke="#141414" stroke-width="1.6"/><circle cx="57.1" cy="18.0" r="0.9" fill="#555"/><circle cx="73.1" cy="18.0" r="0.9" fill="#555"/><circle cx="57.1" cy="49.9" r="0.9" fill="#555"/><circle cx="73.1" cy="49.9" r="0.9" fill="#555"/></svg>
<div class="a" style="left:1613.4px;top:1304px;width:133.89999999999986px;height:9px;background:#24272b;"></div>
</body></html>
